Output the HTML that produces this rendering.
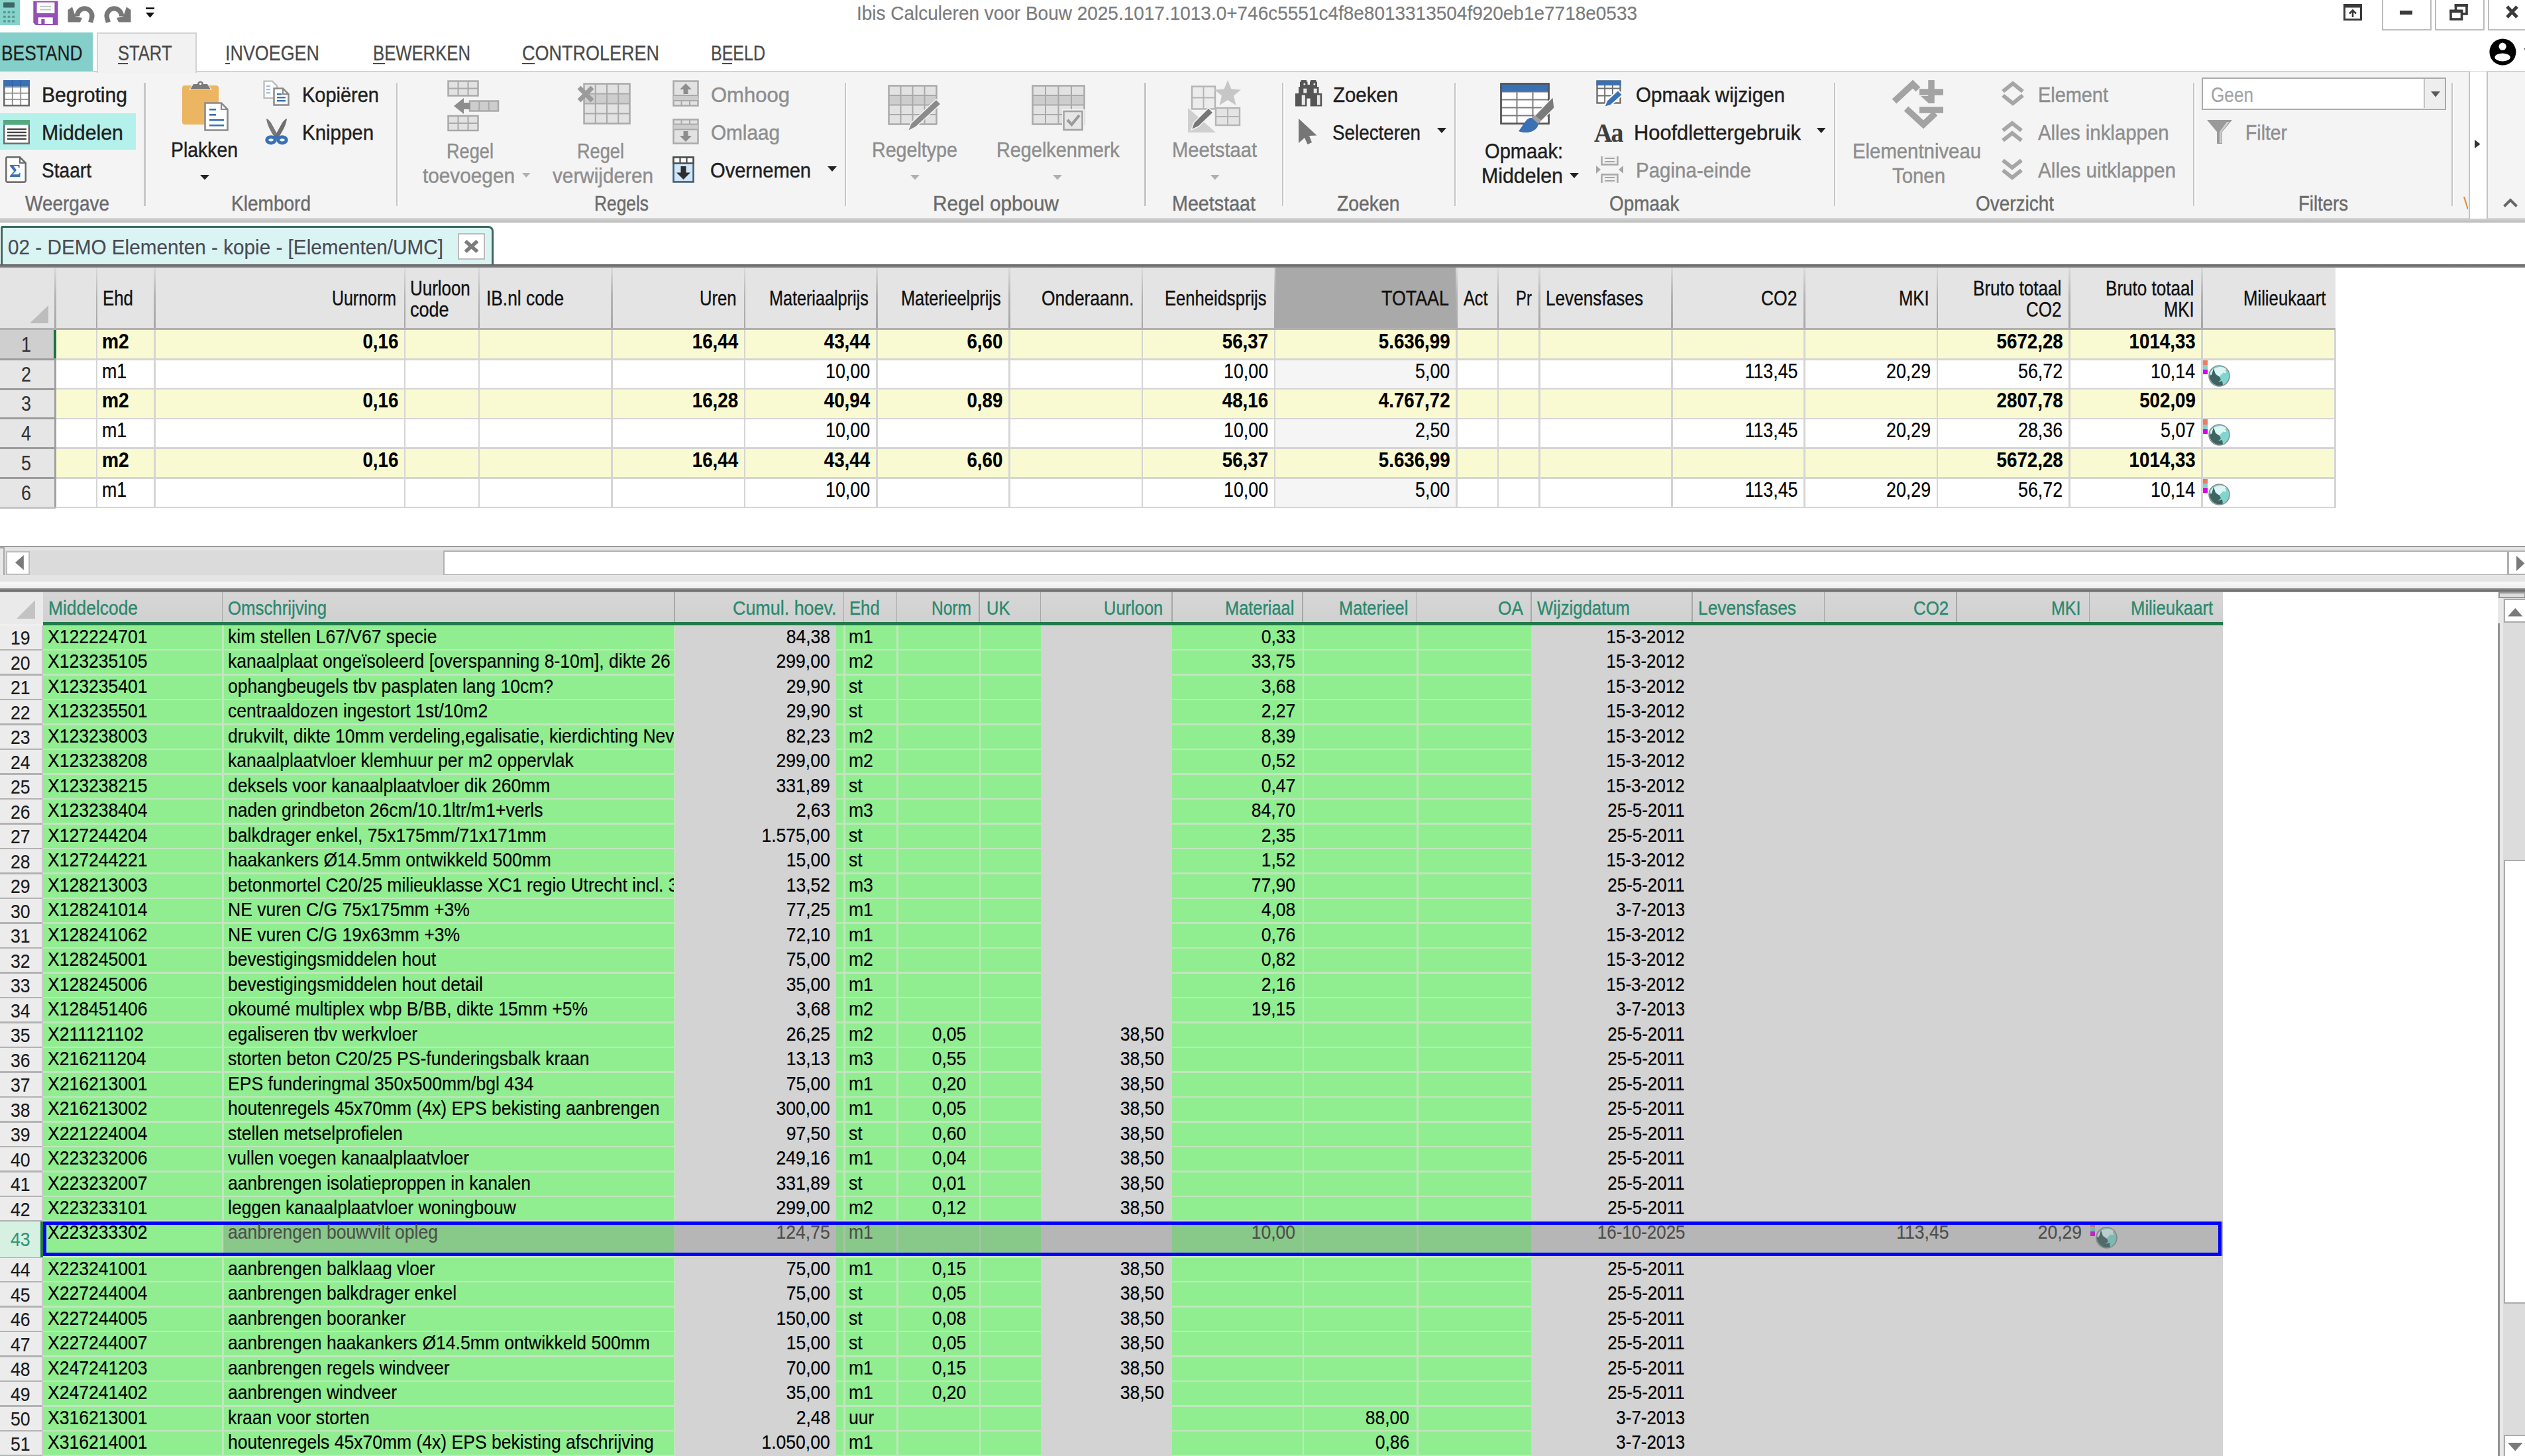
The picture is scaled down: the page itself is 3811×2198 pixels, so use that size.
<!DOCTYPE html>
<html><head><meta charset="utf-8"><title>Ibis Calculeren voor Bouw</title>
<style>
html,body{margin:0;padding:0;}
body{width:3811px;height:2198px;position:relative;overflow:hidden;background:#fff;
font-family:"Liberation Sans",sans-serif;}
#app{position:absolute;left:0;top:0;width:3811px;height:2198px;overflow:hidden;}
.r{position:absolute;box-sizing:border-box;}
.t{position:absolute;white-space:nowrap;line-height:1;display:block;-webkit-text-stroke:0.2px;}
.i{position:absolute;overflow:visible;}
</style></head>
<body>
<div id="app">
<span class="t" style="top:5.11px;font-size:30px;color:#7b7b7b;left:1293.00px;transform-origin:0 0;transform:scaleX(0.9323);">Ibis Calculeren voor Bouw 2025.1017.1013.0+746c5551c4f8e8013313504f920eb1e7718e0533</span>
<div class="r" style="left:3595px;top:-3px;width:75px;height:49px;background:#fff;border:2.5px solid #bcbcbc;"></div>
<div class="r" style="left:3675px;top:-3px;width:75px;height:49px;background:#fff;border:2.5px solid #bcbcbc;"></div>
<div class="r" style="left:3755px;top:-3px;width:75px;height:49px;background:#fff;border:2.5px solid #bcbcbc;"></div>
<div class="r" style="left:0px;top:49px;width:140px;height:59px;background:#84cfca;"></div>
<div class="r" style="left:0px;top:107px;width:3811px;height:223px;background:#f4f4f4;border-top:2.5px solid #d3d3d3;"></div>
<div class="r" style="left:0px;top:329px;width:3811px;height:6.5px;background:linear-gradient(#d6d6d6,#b9b9b9);"></div>
<div class="r" style="left:146px;top:49px;width:151px;height:61px;background:#f2f2f2;border:2.5px solid #d3d3d3;border-bottom:none;"></div>
<span class="t" style="top:64.76px;font-size:31px;color:#1e1e1e;left:1.50px;transform-origin:0 0;transform:scaleX(0.8498);-webkit-text-stroke:0.3px;">BESTAND</span>
<span class="t" style="top:64.76px;font-size:31px;color:#4a4a4a;left:177.50px;transform-origin:0 0;transform:scaleX(0.8254);-webkit-text-stroke:0.3px;">START</span>
<span class="t" style="top:64.76px;font-size:31px;color:#4a4a4a;left:339.50px;transform-origin:0 0;transform:scaleX(0.8675);-webkit-text-stroke:0.3px;">INVOEGEN</span>
<span class="t" style="top:64.76px;font-size:31px;color:#4a4a4a;left:562.50px;transform-origin:0 0;transform:scaleX(0.8283);-webkit-text-stroke:0.3px;">BEWERKEN</span>
<span class="t" style="top:64.76px;font-size:31px;color:#4a4a4a;left:788.00px;transform-origin:0 0;transform:scaleX(0.8706);-webkit-text-stroke:0.3px;">CONTROLEREN</span>
<span class="t" style="top:64.76px;font-size:31px;color:#4a4a4a;left:1073.00px;transform-origin:0 0;transform:scaleX(0.8065);-webkit-text-stroke:0.3px;">BEELD</span>
<div class="r" style="left:177.5px;top:94.5px;width:15px;height:2.5px;background:#4a4a4a;"></div>
<div class="r" style="left:339.5px;top:94.5px;width:7px;height:2.5px;background:#4a4a4a;"></div>
<div class="r" style="left:562.5px;top:94.5px;width:18px;height:2.5px;background:#4a4a4a;"></div>
<div class="r" style="left:788px;top:94.5px;width:18.5px;height:2.5px;background:#4a4a4a;"></div>
<div class="r" style="left:1090px;top:94.5px;width:15px;height:2.5px;background:#4a4a4a;"></div>
<div class="r" style="left:0px;top:171px;width:205px;height:55px;background:#b4f1eb;"></div>
<div class="r" style="left:217px;top:125px;width:2.5px;height:186px;background:#c6c6c6;"></div>
<div class="r" style="left:219.5px;top:125px;width:1.5px;height:186px;background:#fbfbfb;"></div>
<div class="r" style="left:597.5px;top:125px;width:2.5px;height:186px;background:#c6c6c6;"></div>
<div class="r" style="left:600px;top:125px;width:1.5px;height:186px;background:#fbfbfb;"></div>
<div class="r" style="left:1274.5px;top:125px;width:2.5px;height:186px;background:#c6c6c6;"></div>
<div class="r" style="left:1277px;top:125px;width:1.5px;height:186px;background:#fbfbfb;"></div>
<div class="r" style="left:1727px;top:125px;width:2.5px;height:186px;background:#c6c6c6;"></div>
<div class="r" style="left:1729.5px;top:125px;width:1.5px;height:186px;background:#fbfbfb;"></div>
<div class="r" style="left:1934.5px;top:125px;width:2.5px;height:186px;background:#c6c6c6;"></div>
<div class="r" style="left:1937px;top:125px;width:1.5px;height:186px;background:#fbfbfb;"></div>
<div class="r" style="left:2194.5px;top:125px;width:2.5px;height:186px;background:#c6c6c6;"></div>
<div class="r" style="left:2197px;top:125px;width:1.5px;height:186px;background:#fbfbfb;"></div>
<div class="r" style="left:2767.5px;top:125px;width:2.5px;height:186px;background:#c6c6c6;"></div>
<div class="r" style="left:2770px;top:125px;width:1.5px;height:186px;background:#fbfbfb;"></div>
<div class="r" style="left:3309.5px;top:125px;width:2.5px;height:186px;background:#c6c6c6;"></div>
<div class="r" style="left:3312px;top:125px;width:1.5px;height:186px;background:#fbfbfb;"></div>
<div class="r" style="left:3699.5px;top:125px;width:2.5px;height:186px;background:#c6c6c6;"></div>
<div class="r" style="left:3702px;top:125px;width:1.5px;height:186px;background:#fbfbfb;"></div>
<span class="t" style="top:127.76px;font-size:31px;color:#1f1f1f;left:63.00px;transform-origin:0 0;transform:scaleX(0.9723);-webkit-text-stroke:0.45px;">Begroting</span>
<span class="t" style="top:184.76px;font-size:31px;color:#1f1f1f;left:63.00px;transform-origin:0 0;transform:scaleX(0.9773);-webkit-text-stroke:0.45px;">Middelen</span>
<span class="t" style="top:241.76px;font-size:31px;color:#1f1f1f;left:63.00px;transform-origin:0 0;transform:scaleX(0.9061);-webkit-text-stroke:0.45px;">Staart</span>
<span class="t" style="top:291.76px;font-size:31px;color:#6b6b6b;left:38.00px;transform-origin:0 0;transform:scaleX(0.9024);-webkit-text-stroke:0.45px;">Weergave</span>
<span class="t" style="top:210.76px;font-size:31px;color:#1f1f1f;left:258.00px;transform-origin:0 0;transform:scaleX(0.9152);-webkit-text-stroke:0.45px;">Plakken</span>
<span class="t" style="top:127.76px;font-size:31px;color:#1f1f1f;left:456.00px;transform-origin:0 0;transform:scaleX(0.9343);-webkit-text-stroke:0.45px;">Kopiëren</span>
<span class="t" style="top:184.76px;font-size:31px;color:#1f1f1f;left:456.00px;transform-origin:0 0;transform:scaleX(0.9493);-webkit-text-stroke:0.45px;">Knippen</span>
<span class="t" style="top:291.76px;font-size:31px;color:#6b6b6b;left:349.00px;transform-origin:0 0;transform:scaleX(0.9044);-webkit-text-stroke:0.45px;">Klembord</span>
<span class="t" style="top:212.76px;font-size:31px;color:#8e8e8e;left:674.00px;transform-origin:0 0;transform:scaleX(0.8758);-webkit-text-stroke:0.45px;">Regel</span>
<span class="t" style="top:249.76px;font-size:31px;color:#8e8e8e;left:638.00px;transform-origin:0 0;transform:scaleX(0.9601);-webkit-text-stroke:0.45px;">toevoegen</span>
<span class="t" style="top:212.76px;font-size:31px;color:#8e8e8e;left:871.00px;transform-origin:0 0;transform:scaleX(0.8758);-webkit-text-stroke:0.45px;">Regel</span>
<span class="t" style="top:249.76px;font-size:31px;color:#8e8e8e;left:834.00px;transform-origin:0 0;transform:scaleX(0.9586);-webkit-text-stroke:0.45px;">verwijderen</span>
<span class="t" style="top:127.76px;font-size:31px;color:#8e8e8e;left:1073.00px;transform-origin:0 0;-webkit-text-stroke:0.45px;">Omhoog</span>
<span class="t" style="top:184.76px;font-size:31px;color:#8e8e8e;left:1073.00px;transform-origin:0 0;transform:scaleX(0.9585);-webkit-text-stroke:0.45px;">Omlaag</span>
<span class="t" style="top:241.76px;font-size:31px;color:#1f1f1f;left:1072.00px;transform-origin:0 0;transform:scaleX(0.9384);-webkit-text-stroke:0.45px;">Overnemen</span>
<span class="t" style="top:291.76px;font-size:31px;color:#6b6b6b;left:897.00px;transform-origin:0 0;transform:scaleX(0.8492);-webkit-text-stroke:0.45px;">Regels</span>
<span class="t" style="top:210.76px;font-size:31px;color:#8e8e8e;left:1316.00px;transform-origin:0 0;transform:scaleX(0.9237);-webkit-text-stroke:0.45px;">Regeltype</span>
<span class="t" style="top:210.76px;font-size:31px;color:#8e8e8e;left:1504.00px;transform-origin:0 0;transform:scaleX(0.9295);-webkit-text-stroke:0.45px;">Regelkenmerk</span>
<span class="t" style="top:291.76px;font-size:31px;color:#6b6b6b;left:1408.00px;transform-origin:0 0;transform:scaleX(0.9584);-webkit-text-stroke:0.45px;">Regel opbouw</span>
<span class="t" style="top:210.76px;font-size:31px;color:#8e8e8e;left:1769.00px;transform-origin:0 0;transform:scaleX(0.9406);-webkit-text-stroke:0.45px;">Meetstaat</span>
<span class="t" style="top:291.76px;font-size:31px;color:#6b6b6b;left:1769.00px;transform-origin:0 0;transform:scaleX(0.9259);-webkit-text-stroke:0.45px;">Meetstaat</span>
<span class="t" style="top:127.76px;font-size:31px;color:#1f1f1f;left:2012.00px;transform-origin:0 0;transform:scaleX(0.9479);-webkit-text-stroke:0.45px;">Zoeken</span>
<span class="t" style="top:184.76px;font-size:31px;color:#1f1f1f;left:2011.00px;transform-origin:0 0;transform:scaleX(0.8976);-webkit-text-stroke:0.45px;">Selecteren</span>
<span class="t" style="top:291.76px;font-size:31px;color:#6b6b6b;left:2017.50px;transform-origin:0 0;transform:scaleX(0.9141);-webkit-text-stroke:0.45px;">Zoeken</span>
<span class="t" style="top:212.76px;font-size:31px;color:#1f1f1f;left:2241.00px;transform-origin:0 0;transform:scaleX(0.9387);-webkit-text-stroke:0.45px;">Opmaak:</span>
<span class="t" style="top:249.76px;font-size:31px;color:#1f1f1f;left:2236.00px;transform-origin:0 0;transform:scaleX(0.9773);-webkit-text-stroke:0.45px;">Middelen</span>
<span class="t" style="top:127.76px;font-size:31px;color:#1f1f1f;left:2469.00px;transform-origin:0 0;transform:scaleX(0.9531);-webkit-text-stroke:0.45px;">Opmaak wijzigen</span>
<span class="t" style="top:184.76px;font-size:31px;color:#1f1f1f;left:2466.00px;transform-origin:0 0;transform:scaleX(0.9944);-webkit-text-stroke:0.45px;">Hoofdlettergebruik</span>
<span class="t" style="top:241.76px;font-size:31px;color:#8e8e8e;left:2469.00px;transform-origin:0 0;transform:scaleX(0.9521);-webkit-text-stroke:0.45px;">Pagina-einde</span>
<span class="t" style="top:291.76px;font-size:31px;color:#6b6b6b;left:2429.00px;transform-origin:0 0;transform:scaleX(0.8991);-webkit-text-stroke:0.45px;">Opmaak</span>
<span class="t" style="top:212.76px;font-size:31px;color:#8e8e8e;left:2796.00px;transform-origin:0 0;transform:scaleX(0.9460);-webkit-text-stroke:0.45px;">Elementniveau</span>
<span class="t" style="top:249.76px;font-size:31px;color:#8e8e8e;left:2856.00px;transform-origin:0 0;transform:scaleX(0.9470);-webkit-text-stroke:0.45px;">Tonen</span>
<span class="t" style="top:127.76px;font-size:31px;color:#8e8e8e;left:3076.00px;transform-origin:0 0;transform:scaleX(0.9317);-webkit-text-stroke:0.45px;">Element</span>
<span class="t" style="top:184.76px;font-size:31px;color:#8e8e8e;left:3076.00px;transform-origin:0 0;transform:scaleX(0.9474);-webkit-text-stroke:0.45px;">Alles inklappen</span>
<span class="t" style="top:241.76px;font-size:31px;color:#8e8e8e;left:3076.00px;transform-origin:0 0;transform:scaleX(0.9578);-webkit-text-stroke:0.45px;">Alles uitklappen</span>
<span class="t" style="top:291.76px;font-size:31px;color:#6b6b6b;left:2981.50px;transform-origin:0 0;transform:scaleX(0.9009);-webkit-text-stroke:0.45px;">Overzicht</span>
<span class="t" style="top:184.76px;font-size:31px;color:#8e8e8e;left:3389.00px;transform-origin:0 0;transform:scaleX(0.9154);-webkit-text-stroke:0.45px;">Filter</span>
<span class="t" style="top:291.76px;font-size:31px;color:#6b6b6b;left:3469.00px;transform-origin:0 0;transform:scaleX(0.8895);-webkit-text-stroke:0.45px;">Filters</span>
<div class="r" style="left:3323px;top:116.5px;width:369px;height:49px;background:#fff;border:2.5px solid #ababab;"></div>
<div class="r" style="left:3658px;top:119px;width:31.5px;height:44px;background:#eeeeee;border-left:2.5px solid #c4c4c4;"></div>
<span class="t" style="top:127.76px;font-size:31px;color:#a3a3a3;left:3337.00px;transform-origin:0 0;transform:scaleX(0.8444);">Geen</span>
<svg class="i" style="left:302px;top:264px" width="14" height="7.5" viewBox="0 0 14 7.5"><polygon points="0,0 14,0 7,7.5" fill="#222"/></svg>
<svg class="i" style="left:788px;top:261px" width="12.5" height="7" viewBox="0 0 12.5 7"><polygon points="0,0 12.5,0 6.25,7" fill="#b0b0b0"/></svg>
<svg class="i" style="left:1249px;top:251px" width="14" height="8" viewBox="0 0 14 8"><polygon points="0,0 14,0 7,8" fill="#222"/></svg>
<svg class="i" style="left:1374px;top:264px" width="14" height="7.5" viewBox="0 0 14 7.5"><polygon points="0,0 14,0 7,7.5" fill="#b0b0b0"/></svg>
<svg class="i" style="left:1589px;top:264px" width="14" height="7.5" viewBox="0 0 14 7.5"><polygon points="0,0 14,0 7,7.5" fill="#b0b0b0"/></svg>
<svg class="i" style="left:1827px;top:264px" width="13.5" height="7.5" viewBox="0 0 13.5 7.5"><polygon points="0,0 13.5,0 6.75,7.5" fill="#b0b0b0"/></svg>
<svg class="i" style="left:2169px;top:193px" width="14" height="8" viewBox="0 0 14 8"><polygon points="0,0 14,0 7,8" fill="#222"/></svg>
<svg class="i" style="left:2369px;top:261px" width="14" height="8" viewBox="0 0 14 8"><polygon points="0,0 14,0 7,8" fill="#222"/></svg>
<svg class="i" style="left:2742px;top:193px" width="13.5" height="8" viewBox="0 0 13.5 8"><polygon points="0,0 13.5,0 6.75,8" fill="#222"/></svg>
<svg class="i" style="left:3669px;top:138px" width="14" height="8.5" viewBox="0 0 14 8.5"><polygon points="0,0 14,0 7,8.5" fill="#5a5a5a"/></svg>
<div class="r" style="left:3726px;top:108px;width:28.5px;height:222px;background:#fff;border-left:2.5px solid #c4c4c4;border-right:2.5px solid #c4c4c4;"></div>
<svg class="i" style="left:3735px;top:211px" width="8.5" height="13" viewBox="0 0 8.5 13"><polygon points="0,0 8.5,6.5 0,13" fill="#333"/></svg>
<svg class="i" style="left:3778px;top:299px" width="22" height="14" viewBox="0 0 22 14"><polyline points="1.5,12.5 11,3 20.5,12.5" fill="none" stroke="#666" stroke-width="4"/></svg>
<span class="t" style="top:293.30px;font-size:28px;color:#e08a3c;left:3718.00px;transform-origin:0 0;transform:scaleX(0.7496);clip-path:inset(0 50% 0 0);">V</span>
<div class="r" style="left:1px;top:341px;width:744px;height:60px;background:#daf4f4;border:3.2px solid #3d6862;border-bottom:none;border-radius:3px 8px 0 0;"></div>
<span class="t" style="top:356.91px;font-size:32px;color:#4b4b55;left:12.00px;transform-origin:0 0;transform:scaleX(0.9282);">02 - DEMO Elementen - kopie - [Elementen/UMC]</span>
<div class="r" style="left:691px;top:352px;width:41px;height:40px;background:#fff;border:2.5px solid #bcbcbc;"></div>
<svg class="i" style="left:700px;top:363px" width="23" height="18" viewBox="0 0 23 18"><path d="M2.5,1 L20.5,17 M20.5,1 L2.5,17" stroke="#7c7c7c" stroke-width="5.6" fill="none"/></svg>
<div class="r" style="left:0px;top:398.5px;width:3811px;height:5.5px;background:linear-gradient(#5f5f5f,#8a8a8a);"></div>
<svg class="i" style="left:0px;top:0px" width="30" height="38" viewBox="0 0 30 38"><rect x="0" y="0" width="30" height="38" fill="#86d3cc"/><rect x="5" y="3.6" width="17" height="7.8" rx="1" fill="#3e6663"/><rect x="5" y="17" width="3.8" height="3.2" fill="#5c9691"/><rect x="11.6" y="17" width="3.8" height="3.2" fill="#5c9691"/><rect x="18.2" y="17" width="3.8" height="3.2" fill="#5c9691"/><rect x="5" y="23.7" width="3.8" height="3.2" fill="#5c9691"/><rect x="11.6" y="23.7" width="3.8" height="3.2" fill="#5c9691"/><rect x="18.2" y="23.7" width="3.8" height="3.2" fill="#5c9691"/><rect x="5" y="30.4" width="3.8" height="3.2" fill="#5c9691"/><rect x="11.6" y="30.4" width="3.8" height="3.2" fill="#5c9691"/><rect x="18.2" y="30.4" width="3.8" height="3.2" fill="#5c9691"/></svg>
<svg class="i" style="left:50px;top:1px" width="38" height="37" viewBox="0 0 38 37"><path d="M0.3,0.5 H37.5 V37 H4 L0.3,33.5 Z" fill="#9450b4"/><rect x="5.6" y="2.6" width="26.8" height="16.4" fill="#fff"/><rect x="10" y="7.8" width="17" height="2" fill="#c2c2c2"/><rect x="10" y="12.5" width="17" height="2" fill="#c2c2c2"/><rect x="7.7" y="25.3" width="22" height="9.7" fill="#fff"/><rect x="12.3" y="28" width="5.2" height="7" fill="#9450b4"/></svg>
<svg class="i" style="left:102px;top:8px" width="40" height="26" viewBox="0 0 40 26"><path d="M34.6,25.8 L36.2,20 A11.2,11.2 0 1 0 14.5,16.5" fill="none" stroke="#787878" stroke-width="7.2"/><polygon points="0.5,7 0.5,25.5 19,25.5 22,19 12,17 7,2.5" fill="#787878"/></svg>
<svg class="i" style="left:157.5px;top:8px" width="40" height="26" viewBox="0 0 40 26"><g transform="translate(40,0) scale(-1,1)"><path d="M34.6,25.8 L36.2,20 A11.2,11.2 0 1 0 14.5,16.5" fill="none" stroke="#787878" stroke-width="7.2"/><polygon points="0.5,7 0.5,25.5 19,25.5 22,19 12,17 7,2.5" fill="#787878"/></g></svg>
<svg class="i" style="left:219.5px;top:10.5px" width="13" height="16" viewBox="0 0 13 16"><rect x="0" y="0.3" width="13" height="2.6" fill="#111"/><polygon points="0,8 13,8 6.5,15.8" fill="#111"/></svg>
<svg class="i" style="left:5px;top:120.8px" width="40" height="39.5" viewBox="0 0 40 39.5"><rect x="1.2" y="1.2" width="37.6" height="37" fill="#fff"/><line x1="13.7333" y1="1.2" x2="13.7333" y2="38.2" stroke="#8a8a8a" stroke-width="1.7600000000000002"/><line x1="26.2667" y1="1.2" x2="26.2667" y2="38.2" stroke="#8a8a8a" stroke-width="1.7600000000000002"/><line x1="1.2" y1="10.45" x2="38.8" y2="10.45" stroke="#8a8a8a" stroke-width="1.7600000000000002"/><line x1="1.2" y1="19.7" x2="38.8" y2="19.7" stroke="#8a8a8a" stroke-width="1.7600000000000002"/><line x1="1.2" y1="28.95" x2="38.8" y2="28.95" stroke="#8a8a8a" stroke-width="1.7600000000000002"/><rect x="1.2" y="1.2" width="37.6" height="37" fill="none" stroke="#8a8a8a" stroke-width="2.2"/><rect x="1.2" y="1.2" width="37.6" height="37" fill="none" stroke="#6a6a6a" stroke-width="2.4"/><rect x="0" y="0" width="40" height="9.6" fill="#3a70b4"/><path d="M13.7,0 V9.6 M26.3,0 V9.6" stroke="#2f63a5" stroke-width="1.8"/></svg>
<svg class="i" style="left:5px;top:181px" width="40" height="37" viewBox="0 0 40 37"><rect x="1.2" y="1.2" width="37.6" height="34.4" fill="#fff" stroke="#6a6a6a" stroke-width="2.4"/><rect x="0" y="0" width="40" height="7.6" fill="#55ab80"/><rect x="5.8" y="12.8" width="29" height="2.4" fill="#444"/><rect x="5.8" y="17.7" width="29" height="2.4" fill="#444"/><rect x="5.8" y="22.6" width="29" height="2.4" fill="#444"/><rect x="5.8" y="27.5" width="29" height="2.4" fill="#444"/></svg>
<svg class="i" style="left:8px;top:236px" width="32" height="40" viewBox="0 0 32 40"><path d="M3,1.3 H22 L30.7,10 V36.5 Q30.7,38.7 28.5,38.7 H3 Q1.3,38.7 1.3,36.5 V3 Q1.3,1.3 3,1.3 Z" fill="#fff" stroke="#6a6a6a" stroke-width="2.5"/><path d="M22,1.5 V10 H30.5" fill="none" stroke="#6a6a6a" stroke-width="2.2"/></svg>
<span class="t" style="left:14px;top:244.5px;font-family:'Liberation Serif',serif;font-weight:bold;font-size:27px;color:#3a70b4;">Σ</span>
<svg class="i" style="left:275px;top:122px" width="70" height="76" viewBox="0 0 70 76"><rect x="0" y="7" width="55" height="59" rx="4" fill="#ecb562"/><path d="M12,13 L17,5 H23 C23,-1 32,-1 32,5 H38 L43,13 Z" fill="#7a7a7a" stroke="#fbf3e4" stroke-width="2" paint-order="stroke"/><circle cx="27.5" cy="4.5" r="1.8" fill="#f4f4f4"/><path d="M34.5,33.5 H59 L68.5,43 V74.5 H34.5 Z" fill="#fff" stroke="#8a8a8a" stroke-width="2.6"/><path d="M59,33.5 V43 H68.5" fill="none" stroke="#8a8a8a" stroke-width="2.2"/><rect x="41" y="42" width="10" height="2.6" fill="#3a70b4"/><rect x="41" y="50" width="10" height="2.6" fill="#3a70b4"/><rect x="41" y="58" width="22" height="2.6" fill="#3a70b4"/><rect x="41" y="66" width="22" height="2.6" fill="#3a70b4"/></svg>
<svg class="i" style="left:397px;top:121px" width="40" height="39" viewBox="0 0 40 39"><path d="M1.5,1.5 H14 L21,8.5 V27 H1.5 Z" fill="#fdfdfd" stroke="#b8b8b8" stroke-width="2.2"/><rect x="5" y="8" width="6" height="2.2" fill="#9dbde0"/><rect x="5" y="13" width="6" height="2.2" fill="#9dbde0"/><rect x="5" y="18" width="6" height="2.2" fill="#9dbde0"/><path d="M16.5,12.5 H30 L38.5,21 V37.5 H16.5 Z" fill="#fff" stroke="#8a8a8a" stroke-width="2.5"/><path d="M30,12.5 V21 H38.5" fill="none" stroke="#8a8a8a" stroke-width="2"/><rect x="21" y="20" width="7" height="2.4" fill="#3a70b4"/><rect x="21" y="25" width="13" height="2.4" fill="#3a70b4"/><rect x="21" y="30" width="13" height="2.4" fill="#3a70b4"/></svg>
<svg class="i" style="left:400px;top:179px" width="35" height="39" viewBox="0 0 35 39"><path d="M2,0 C5,1 8,4 10,8 L21,28 L15.5,30 C9,20 3,10 2,0 Z" fill="#7a7a7a"/><path d="M33,0 C30,1 27,4 25,8 L14,28 L19.5,30 C26,20 32,10 33,0 Z" fill="#6e6e6e"/><ellipse cx="9" cy="32.3" rx="6.3" ry="4.6" fill="none" stroke="#3a70b4" stroke-width="5"/><ellipse cx="26" cy="32.3" rx="6.3" ry="4.6" fill="none" stroke="#3a70b4" stroke-width="5"/><rect x="14" y="25.5" width="7" height="6" fill="#3a70b4"/></svg>
<svg class="i" style="left:675px;top:121px" width="78" height="77" viewBox="0 0 78 77"><rect x="1.5" y="1.5" width="45" height="22" fill="#e2e2e2"/><line x1="16.5" y1="1.5" x2="16.5" y2="23.5" stroke="#a9a9a9" stroke-width="2.0"/><line x1="31.5" y1="1.5" x2="31.5" y2="23.5" stroke="#a9a9a9" stroke-width="2.0"/><line x1="1.5" y1="12.5" x2="46.5" y2="12.5" stroke="#a9a9a9" stroke-width="2.0"/><rect x="1.5" y="1.5" width="45" height="22" fill="none" stroke="#a9a9a9" stroke-width="2.5"/><rect x="1.5" y="54" width="45" height="22" fill="#e2e2e2"/><line x1="16.5" y1="54" x2="16.5" y2="76" stroke="#a9a9a9" stroke-width="2.0"/><line x1="31.5" y1="54" x2="31.5" y2="76" stroke="#a9a9a9" stroke-width="2.0"/><line x1="1.5" y1="65" x2="46.5" y2="65" stroke="#a9a9a9" stroke-width="2.0"/><rect x="1.5" y="54" width="45" height="22" fill="none" stroke="#a9a9a9" stroke-width="2.5"/><rect x="34" y="31.5" width="43" height="15" fill="#cdcdcd"/><line x1="48.3333" y1="31.5" x2="48.3333" y2="46.5" stroke="#a9a9a9" stroke-width="2.0"/><line x1="62.6667" y1="31.5" x2="62.6667" y2="46.5" stroke="#a9a9a9" stroke-width="2.0"/><rect x="34" y="31.5" width="43" height="15" fill="none" stroke="#a9a9a9" stroke-width="2.5"/><polygon points="10,39 25,27 25,34 34,34 34,44 25,44 25,51" fill="#8d8d8d"/></svg>
<svg class="i" style="left:872px;top:125px" width="80" height="63" viewBox="0 0 80 63"><rect x="9.5" y="1.5" width="69" height="60" fill="#e2e2e2"/><rect x="9.5" y="16.5" width="69" height="15" fill="#cdcdcd"/><line x1="26.75" y1="1.5" x2="26.75" y2="61.5" stroke="#a9a9a9" stroke-width="2.0"/><line x1="44" y1="1.5" x2="44" y2="61.5" stroke="#a9a9a9" stroke-width="2.0"/><line x1="61.25" y1="1.5" x2="61.25" y2="61.5" stroke="#a9a9a9" stroke-width="2.0"/><line x1="9.5" y1="16.5" x2="78.5" y2="16.5" stroke="#a9a9a9" stroke-width="2.0"/><line x1="9.5" y1="31.5" x2="78.5" y2="31.5" stroke="#a9a9a9" stroke-width="2.0"/><line x1="9.5" y1="46.5" x2="78.5" y2="46.5" stroke="#a9a9a9" stroke-width="2.0"/><rect x="9.5" y="1.5" width="69" height="60" fill="none" stroke="#a9a9a9" stroke-width="2.5"/><path d="M2,7 L22,27 M22,7 L2,27" stroke="#9b9b9b" stroke-width="7" fill="none"/></svg>
<svg class="i" style="left:1015px;top:121px" width="40" height="40" viewBox="0 0 40 40"><rect x="1.5" y="1.5" width="37" height="37" fill="#e2e2e2" stroke="#a9a9a9" stroke-width="2.5"/><rect x="1.5" y="23" width="37" height="8" fill="#cdcdcd"/><path d="M1.5,23 H38.5 M1.5,31 H38.5 M13.5,31 V38.5 M26,31 V38.5" stroke="#a9a9a9" stroke-width="2" fill="none"/><polygon points="20,5 29,14 23.5,14 23.5,21 16.5,21 16.5,14 11,14" fill="#8d8d8d"/></svg>
<svg class="i" style="left:1015px;top:179px" width="40" height="39" viewBox="0 0 40 39"><rect x="1.5" y="1.5" width="37" height="36" fill="#e2e2e2" stroke="#a9a9a9" stroke-width="2.5"/><rect x="1.5" y="8.5" width="37" height="8" fill="#cdcdcd"/><path d="M1.5,8.5 H38.5 M1.5,16.5 H38.5 M13.5,1.5 V8.5 M26,1.5 V8.5" stroke="#a9a9a9" stroke-width="2" fill="none"/><polygon points="20,35 29,26 23.5,26 23.5,19 16.5,19 16.5,26 11,26" fill="#8d8d8d"/></svg>
<svg class="i" style="left:1015px;top:236px" width="33" height="40" viewBox="0 0 33 40"><rect x="1.5" y="1.5" width="30" height="37" fill="#cfe7f8" stroke="#3f5d76" stroke-width="2.6"/><rect x="1.5" y="1.5" width="30" height="9" fill="#fff" stroke="#4e4e4e" stroke-width="2.6"/><path d="M11.5,1.5 V10.5 M21.5,1.5 V10.5" stroke="#4e4e4e" stroke-width="2.2"/><polygon points="16.5,35 27,24.5 20.5,24.5 20.5,15 12.5,15 12.5,24.5 6,24.5" fill="#2e2e2e"/></svg>
<svg class="i" style="left:1340px;top:128px" width="80" height="72" viewBox="0 0 80 72"><rect x="1.5" y="1.5" width="72" height="58" fill="#e2e2e2"/><rect x="1.5" y="16" width="72" height="14.5" fill="#cdcdcd"/><line x1="19.5" y1="1.5" x2="19.5" y2="59.5" stroke="#a9a9a9" stroke-width="2.0"/><line x1="37.5" y1="1.5" x2="37.5" y2="59.5" stroke="#a9a9a9" stroke-width="2.0"/><line x1="55.5" y1="1.5" x2="55.5" y2="59.5" stroke="#a9a9a9" stroke-width="2.0"/><line x1="1.5" y1="16" x2="73.5" y2="16" stroke="#a9a9a9" stroke-width="2.0"/><line x1="1.5" y1="30.5" x2="73.5" y2="30.5" stroke="#a9a9a9" stroke-width="2.0"/><line x1="1.5" y1="45" x2="73.5" y2="45" stroke="#a9a9a9" stroke-width="2.0"/><rect x="1.5" y="1.5" width="72" height="58" fill="none" stroke="#a9a9a9" stroke-width="2.5"/><polygon points="73,22 80,29 42,64 30,70 35,58" fill="#8b8b8b" stroke="#f4f4f4" stroke-width="1.5"/></svg>
<svg class="i" style="left:1557px;top:128px" width="81" height="70" viewBox="0 0 81 70"><rect x="1.5" y="1.5" width="78" height="58" fill="#e2e2e2"/><rect x="1.5" y="16" width="78" height="14.5" fill="#cdcdcd"/><line x1="21" y1="1.5" x2="21" y2="59.5" stroke="#a9a9a9" stroke-width="2.0"/><line x1="40.5" y1="1.5" x2="40.5" y2="59.5" stroke="#a9a9a9" stroke-width="2.0"/><line x1="60" y1="1.5" x2="60" y2="59.5" stroke="#a9a9a9" stroke-width="2.0"/><line x1="1.5" y1="16" x2="79.5" y2="16" stroke="#a9a9a9" stroke-width="2.0"/><line x1="1.5" y1="30.5" x2="79.5" y2="30.5" stroke="#a9a9a9" stroke-width="2.0"/><line x1="1.5" y1="45" x2="79.5" y2="45" stroke="#a9a9a9" stroke-width="2.0"/><rect x="1.5" y="1.5" width="78" height="58" fill="none" stroke="#a9a9a9" stroke-width="2.5"/><rect x="46" y="37" width="34" height="33" fill="#f4f4f4"/><rect x="48.5" y="40" width="28" height="28" fill="#e6e6e6" stroke="#a3a3a3" stroke-width="2.6"/><path d="M54,53 L60.5,60 L72,46" fill="none" stroke="#9a9a9a" stroke-width="4.2"/></svg>
<svg class="i" style="left:1792px;top:121px" width="81" height="79" viewBox="0 0 81 79"><rect x="7" y="9.5" width="35" height="34" fill="#ececec"/><line x1="24.5" y1="9.5" x2="24.5" y2="43.5" stroke="#b4b4b4" stroke-width="1.92"/><line x1="7" y1="26.5" x2="42" y2="26.5" stroke="#b4b4b4" stroke-width="1.92"/><rect x="7" y="9.5" width="35" height="34" fill="none" stroke="#b4b4b4" stroke-width="2.4"/><rect x="43" y="42" width="36" height="26" fill="#e4e4e4"/><line x1="61" y1="42" x2="61" y2="68" stroke="#b4b4b4" stroke-width="1.92"/><line x1="43" y1="55" x2="79" y2="55" stroke="#b4b4b4" stroke-width="1.92"/><rect x="43" y="42" width="36" height="26" fill="none" stroke="#b4b4b4" stroke-width="2.4"/><polygon points="61,0 66.5,13.5 81,14.5 70,23.5 73.5,38 61,30 48.5,38 52,23.5 41,14.5 55.5,13.5" fill="#c6c6c6"/><polygon points="1,42 43,79 1,79" fill="#cfcfcf"/><polygon points="32,42 39,49 17,70 6,75 10,64" fill="#777" stroke="#f4f4f4" stroke-width="1.5"/></svg>
<svg class="i" style="left:1955px;top:121px" width="41" height="40" viewBox="0 0 41 40"><rect x="8.7" y="0" width="8.3" height="3" fill="#555555"/><rect x="23" y="0" width="8.3" height="3" fill="#555555"/><rect x="7" y="2.4" width="11.5" height="8" fill="#555555"/><rect x="22" y="2.4" width="11" height="8" fill="#555555"/><rect x="18" y="6.8" width="5" height="3.6" fill="#555555"/><rect x="5" y="10" width="30.5" height="10.2" fill="#555555"/><rect x="0" y="20" width="40.2" height="19.5" fill="#555555"/><rect x="17.4" y="27.6" width="5.2" height="12.5" fill="#f4f4f4"/><circle cx="13.8" cy="6" r="1.5" fill="#e9e9e9"/><circle cx="28.8" cy="6" r="1.5" fill="#e9e9e9"/><rect x="12.3" y="12.7" width="5" height="6.7" fill="#e9e9e9"/><rect x="27.7" y="12.7" width="5" height="6.7" fill="#e9e9e9"/><rect x="9.7" y="22.5" width="5.2" height="15" fill="#e9e9e9"/><rect x="32.9" y="22.5" width="4.6" height="15" fill="#e9e9e9"/></svg>
<svg class="i" style="left:1960px;top:179px" width="28" height="39" viewBox="0 0 28 39"><polygon points="0,0 0,37 9,29 13.5,39 20,36 16,26 27.5,25.5" fill="#767676"/></svg>
<svg class="i" style="left:2264px;top:125px" width="82" height="76" viewBox="0 0 82 76"><rect x="1.5" y="1.5" width="72" height="60" fill="#fff"/><line x1="25.5" y1="1.5" x2="25.5" y2="61.5" stroke="#7c7c7c" stroke-width="2.0"/><line x1="49.5" y1="1.5" x2="49.5" y2="61.5" stroke="#7c7c7c" stroke-width="2.0"/><line x1="1.5" y1="13.5" x2="73.5" y2="13.5" stroke="#7c7c7c" stroke-width="2.0"/><line x1="1.5" y1="25.5" x2="73.5" y2="25.5" stroke="#7c7c7c" stroke-width="2.0"/><line x1="1.5" y1="37.5" x2="73.5" y2="37.5" stroke="#7c7c7c" stroke-width="2.0"/><line x1="1.5" y1="49.5" x2="73.5" y2="49.5" stroke="#7c7c7c" stroke-width="2.0"/><rect x="1.5" y="1.5" width="72" height="60" fill="none" stroke="#7c7c7c" stroke-width="2.5"/><rect x="0.5" y="0.5" width="74" height="12.5" fill="#3a70b4"/><rect x="1.5" y="1.5" width="72" height="60" fill="none" stroke="#555" stroke-width="2.5"/><polygon points="80,21 82,38 62,58 52,50" fill="#7b7b7b" stroke="#f4f4f4" stroke-width="1.5"/><polygon points="52,49 62,57 58,62 48,54" fill="#a0a0a0"/><path d="M48,53 C40,52 38,60 28,73 C40,78 56,74 58,62 Z" fill="#3a70b4"/></svg>
<svg class="i" style="left:2409px;top:121px" width="41" height="40" viewBox="0 0 41 40"><rect x="1.5" y="1.5" width="35" height="33" fill="#fff"/><line x1="13.1667" y1="1.5" x2="13.1667" y2="34.5" stroke="#6c6c6c" stroke-width="1.92"/><line x1="24.8333" y1="1.5" x2="24.8333" y2="34.5" stroke="#6c6c6c" stroke-width="1.92"/><line x1="1.5" y1="12.5" x2="36.5" y2="12.5" stroke="#6c6c6c" stroke-width="1.92"/><line x1="1.5" y1="23.5" x2="36.5" y2="23.5" stroke="#6c6c6c" stroke-width="1.92"/><rect x="1.5" y="1.5" width="35" height="33" fill="none" stroke="#6c6c6c" stroke-width="2.4"/><rect x="0.5" y="0.5" width="37" height="7.5" fill="#3a70b4"/><polygon points="33,15 40,22 22,38 12,41 16,31" fill="#3a70b4" stroke="#f4f4f4" stroke-width="2.2"/></svg>
<span class="t" style="left:2406px;top:180px;font-family:'Liberation Serif',serif;font-weight:bold;font-size:41px;color:#3e3e3e;letter-spacing:-2px;transform:scaleX(.92);transform-origin:0 0">Aa</span>
<svg class="i" style="left:2409px;top:236px" width="41" height="40" viewBox="0 0 41 40"><path d="M8.5,0 V12.5 H32.5 V0" fill="#f0f0f0" stroke="#a6a6a6" stroke-width="2.4"/><path d="M8.5,40 V27.5 H32.5 V40" fill="#f0f0f0" stroke="#a6a6a6" stroke-width="2.4"/><path d="M13,3 H28 M13,8 H28 M13,32 H28 M13,37 H28" stroke="#a6a6a6" stroke-width="2"/><polygon points="0,14 7,20 0,26" fill="#a6a6a6"/><polygon points="41,14 34,20 41,26" fill="#a6a6a6"/></svg>
<svg class="i" style="left:2857px;top:121px" width="76" height="73" viewBox="0 0 76 73"><polyline points="2,32 30,6 38,14" fill="none" stroke="#a3a3a3" stroke-width="9.5"/><path d="M40,18 H76 M58,0 V35" stroke="#a3a3a3" stroke-width="9.5"/><polygon points="42,24 54,24 54,35" fill="#a3a3a3"/><path d="M40,45 H76" stroke="#a3a3a3" stroke-width="9.5"/><polyline points="20,43 46,67 64,50" fill="none" stroke="#a3a3a3" stroke-width="9.5"/></svg>
<svg class="i" style="left:3020px;top:123px" width="36" height="36" viewBox="0 0 36 36"><polyline points="3,15 18,3 33,15" fill="none" stroke="#a6a6a6" stroke-width="6"/><polyline points="3,21 18,33 33,21" fill="none" stroke="#a6a6a6" stroke-width="6"/></svg>
<svg class="i" style="left:3021px;top:183px" width="32" height="31" viewBox="0 0 32 31"><polyline points="2,14 16,3 30,14" fill="none" stroke="#a6a6a6" stroke-width="6"/><polyline points="2,29 16,18 30,29" fill="none" stroke="#a6a6a6" stroke-width="6"/></svg>
<svg class="i" style="left:3021px;top:240px" width="32" height="31" viewBox="0 0 32 31"><polyline points="2,2 16,13 30,2" fill="none" stroke="#a6a6a6" stroke-width="6"/><polyline points="2,17 16,28 30,17" fill="none" stroke="#a6a6a6" stroke-width="6"/></svg>
<svg class="i" style="left:3331px;top:180px" width="38" height="38" viewBox="0 0 38 38"><polygon points="0,1 38,1 23,19 23,37 15,37 15,19" fill="#9a9a9a"/><polygon points="19,19 30,4 34,4 22,19 22,36 19,36" fill="#cfcfcf"/></svg>
<svg class="i" style="left:3537px;top:6px" width="28" height="25" viewBox="0 0 28 25"><rect x="1.5" y="1.5" width="25" height="22" fill="#fff" stroke="#3a3a3a" stroke-width="3"/><rect x="1.5" y="1.5" width="25" height="4" fill="#3a3a3a"/><path d="M14,20 V10 M9,14.5 L14,9.5 L19,14.5" fill="none" stroke="#3a3a3a" stroke-width="2.6"/></svg>
<div class="r" style="left:3622px;top:16px;width:18.5px;height:5.5px;background:#3a3a3a;"></div>
<svg class="i" style="left:3697px;top:6px" width="28" height="25" viewBox="0 0 28 25"><rect x="9.5" y="2" width="16.5" height="13" fill="#fff" stroke="#3a3a3a" stroke-width="3.6"/><rect x="2" y="10.5" width="16.5" height="12.5" fill="#fff" stroke="#3a3a3a" stroke-width="3.6"/><rect x="0.2" y="8.7" width="20" height="4.6" fill="#3a3a3a"/><rect x="7.7" y="0.2" width="20" height="4" fill="#3a3a3a"/></svg>
<svg class="i" style="left:3782px;top:9px" width="19" height="18" viewBox="0 0 19 18"><path d="M2,1 L17,17 M17,1 L2,17" stroke="#3a3a3a" stroke-width="5" fill="none"/></svg>
<svg class="i" style="left:3758px;top:58px" width="40" height="41" viewBox="0 0 40 41"><circle cx="19.4" cy="20.5" r="20" fill="#000"/><circle cx="19.1" cy="12.2" r="5.6" fill="#fff"/><ellipse cx="19.1" cy="28.5" rx="11.7" ry="5.9" fill="#fff"/></svg>
<svg class="i" style="left:3808.5px;top:72.5px" width="8" height="5" viewBox="0 0 8 5"><polygon points="0,0 8,0 4,5" fill="#444"/></svg>
<div class="r" style="left:0px;top:404px;width:3524.5px;height:93.5px;background:#e4e4e4;"></div>
<div class="r" style="left:1924px;top:404px;width:274.5px;height:93.5px;background:#a9a9a9;"></div>
<div class="r" style="left:83.5px;top:497.5px;width:3441px;height:44.75px;background:#fafad2;"></div>
<div class="r" style="left:0px;top:497.5px;width:83.5px;height:44.75px;background:#cfcfcf;"></div>
<div class="r" style="left:1924px;top:542.25px;width:274.5px;height:44.75px;background:#f5f5f5;"></div>
<div class="r" style="left:0px;top:542.25px;width:83.5px;height:44.75px;background:#e6e6e6;"></div>
<div class="r" style="left:83.5px;top:587px;width:3441px;height:44.75px;background:#fafad2;"></div>
<div class="r" style="left:0px;top:587px;width:83.5px;height:44.75px;background:#e6e6e6;"></div>
<div class="r" style="left:1924px;top:631.75px;width:274.5px;height:44.75px;background:#f5f5f5;"></div>
<div class="r" style="left:0px;top:631.75px;width:83.5px;height:44.75px;background:#e6e6e6;"></div>
<div class="r" style="left:83.5px;top:676.5px;width:3441px;height:44.75px;background:#fafad2;"></div>
<div class="r" style="left:0px;top:676.5px;width:83.5px;height:44.75px;background:#e6e6e6;"></div>
<div class="r" style="left:1924px;top:721.25px;width:274.5px;height:44.75px;background:#f5f5f5;"></div>
<div class="r" style="left:0px;top:721.25px;width:83.5px;height:44.75px;background:#e6e6e6;"></div>
<div class="r" style="left:83.5px;top:541px;width:3441px;height:2.5px;background:#d5d5d5;"></div>
<div class="r" style="left:83.5px;top:585.75px;width:3441px;height:2.5px;background:#d5d5d5;"></div>
<div class="r" style="left:83.5px;top:630.5px;width:3441px;height:2.5px;background:#d5d5d5;"></div>
<div class="r" style="left:83.5px;top:675.25px;width:3441px;height:2.5px;background:#d5d5d5;"></div>
<div class="r" style="left:83.5px;top:720px;width:3441px;height:2.5px;background:#d5d5d5;"></div>
<div class="r" style="left:83.5px;top:764.75px;width:3441px;height:2.5px;background:#d5d5d5;"></div>
<div class="r" style="left:144.75px;top:497.5px;width:2.5px;height:269.75px;background:#d5d5d5;"></div>
<div class="r" style="left:232.25px;top:497.5px;width:2.5px;height:269.75px;background:#d5d5d5;"></div>
<div class="r" style="left:609.75px;top:497.5px;width:2.5px;height:269.75px;background:#d5d5d5;"></div>
<div class="r" style="left:721.75px;top:497.5px;width:2.5px;height:269.75px;background:#d5d5d5;"></div>
<div class="r" style="left:922.25px;top:497.5px;width:2.5px;height:269.75px;background:#d5d5d5;"></div>
<div class="r" style="left:1122.75px;top:497.5px;width:2.5px;height:269.75px;background:#d5d5d5;"></div>
<div class="r" style="left:1322.25px;top:497.5px;width:2.5px;height:269.75px;background:#d5d5d5;"></div>
<div class="r" style="left:1522.25px;top:497.5px;width:2.5px;height:269.75px;background:#d5d5d5;"></div>
<div class="r" style="left:1722.75px;top:497.5px;width:2.5px;height:269.75px;background:#d5d5d5;"></div>
<div class="r" style="left:1922.75px;top:497.5px;width:2.5px;height:269.75px;background:#d5d5d5;"></div>
<div class="r" style="left:2197.25px;top:497.5px;width:2.5px;height:269.75px;background:#d5d5d5;"></div>
<div class="r" style="left:2259.75px;top:497.5px;width:2.5px;height:269.75px;background:#d5d5d5;"></div>
<div class="r" style="left:2322.25px;top:497.5px;width:2.5px;height:269.75px;background:#d5d5d5;"></div>
<div class="r" style="left:2522.25px;top:497.5px;width:2.5px;height:269.75px;background:#d5d5d5;"></div>
<div class="r" style="left:2722.25px;top:497.5px;width:2.5px;height:269.75px;background:#d5d5d5;"></div>
<div class="r" style="left:2922.75px;top:497.5px;width:2.5px;height:269.75px;background:#d5d5d5;"></div>
<div class="r" style="left:3122.25px;top:497.5px;width:2.5px;height:269.75px;background:#d5d5d5;"></div>
<div class="r" style="left:3322.25px;top:497.5px;width:2.5px;height:269.75px;background:#d5d5d5;"></div>
<div class="r" style="left:3523.25px;top:497.5px;width:2.5px;height:269.75px;background:#d5d5d5;"></div>
<div class="r" style="left:82.25px;top:404px;width:2.5px;height:93.5px;background:linear-gradient(#dadada,#b4b4b4 45%,#a6a6a6);"></div>
<div class="r" style="left:144.75px;top:404px;width:2.5px;height:93.5px;background:linear-gradient(#dadada,#b4b4b4 45%,#a6a6a6);"></div>
<div class="r" style="left:232.25px;top:404px;width:2.5px;height:93.5px;background:linear-gradient(#dadada,#b4b4b4 45%,#a6a6a6);"></div>
<div class="r" style="left:609.75px;top:404px;width:2.5px;height:93.5px;background:linear-gradient(#dadada,#b4b4b4 45%,#a6a6a6);"></div>
<div class="r" style="left:721.75px;top:404px;width:2.5px;height:93.5px;background:linear-gradient(#dadada,#b4b4b4 45%,#a6a6a6);"></div>
<div class="r" style="left:922.25px;top:404px;width:2.5px;height:93.5px;background:linear-gradient(#dadada,#b4b4b4 45%,#a6a6a6);"></div>
<div class="r" style="left:1122.75px;top:404px;width:2.5px;height:93.5px;background:linear-gradient(#dadada,#b4b4b4 45%,#a6a6a6);"></div>
<div class="r" style="left:1322.25px;top:404px;width:2.5px;height:93.5px;background:linear-gradient(#dadada,#b4b4b4 45%,#a6a6a6);"></div>
<div class="r" style="left:1522.25px;top:404px;width:2.5px;height:93.5px;background:linear-gradient(#dadada,#b4b4b4 45%,#a6a6a6);"></div>
<div class="r" style="left:1722.75px;top:404px;width:2.5px;height:93.5px;background:linear-gradient(#dadada,#b4b4b4 45%,#a6a6a6);"></div>
<div class="r" style="left:1922.75px;top:404px;width:2.5px;height:93.5px;background:linear-gradient(#dadada,#b4b4b4 45%,#a6a6a6);"></div>
<div class="r" style="left:2197.25px;top:404px;width:2.5px;height:93.5px;background:linear-gradient(#dadada,#b4b4b4 45%,#a6a6a6);"></div>
<div class="r" style="left:2259.75px;top:404px;width:2.5px;height:93.5px;background:linear-gradient(#dadada,#b4b4b4 45%,#a6a6a6);"></div>
<div class="r" style="left:2322.25px;top:404px;width:2.5px;height:93.5px;background:linear-gradient(#dadada,#b4b4b4 45%,#a6a6a6);"></div>
<div class="r" style="left:2522.25px;top:404px;width:2.5px;height:93.5px;background:linear-gradient(#dadada,#b4b4b4 45%,#a6a6a6);"></div>
<div class="r" style="left:2722.25px;top:404px;width:2.5px;height:93.5px;background:linear-gradient(#dadada,#b4b4b4 45%,#a6a6a6);"></div>
<div class="r" style="left:2922.75px;top:404px;width:2.5px;height:93.5px;background:linear-gradient(#dadada,#b4b4b4 45%,#a6a6a6);"></div>
<div class="r" style="left:3122.25px;top:404px;width:2.5px;height:93.5px;background:linear-gradient(#dadada,#b4b4b4 45%,#a6a6a6);"></div>
<div class="r" style="left:3322.25px;top:404px;width:2.5px;height:93.5px;background:linear-gradient(#dadada,#b4b4b4 45%,#a6a6a6);"></div>
<div class="r" style="left:0px;top:495px;width:3524.5px;height:2.8px;background:#b0b0b0;"></div>
<div class="r" style="left:0px;top:540.75px;width:83.5px;height:3px;background:#9c9c9c;"></div>
<div class="r" style="left:0px;top:585.5px;width:83.5px;height:3px;background:#9c9c9c;"></div>
<div class="r" style="left:0px;top:630.25px;width:83.5px;height:3px;background:#9c9c9c;"></div>
<div class="r" style="left:0px;top:675px;width:83.5px;height:3px;background:#9c9c9c;"></div>
<div class="r" style="left:0px;top:719.75px;width:83.5px;height:3px;background:#9c9c9c;"></div>
<div class="r" style="left:0px;top:764.5px;width:83.5px;height:3px;background:#c4c4c4;"></div>
<div class="r" style="left:82.2px;top:497.5px;width:2.6px;height:268.5px;background:#a0a0a0;"></div>
<div class="r" style="left:80.5px;top:497.5px;width:4.5px;height:43.75px;background:#1f7246;"></div>
<svg class="i" style="left:45px;top:460.5px" width="28" height="27" viewBox="0 0 28 27"><polygon points="28,0 28,27 0,27" fill="#bdbdbd"/></svg>
<span class="t" style="top:433.91px;font-size:32px;color:#111;left:155.00px;transform-origin:0 0;transform:scaleX(0.8076);-webkit-text-stroke:0.4px;">Ehd</span>
<span class="t" style="top:433.91px;font-size:32px;color:#111;left:501.00px;transform-origin:0 0;transform:scaleX(0.7792);-webkit-text-stroke:0.4px;">Uurnorm</span>
<span class="t" style="top:418.91px;font-size:32px;color:#111;left:619.30px;transform-origin:0 0;transform:scaleX(0.8098);-webkit-text-stroke:0.4px;">Uurloon</span>
<span class="t" style="top:451.41px;font-size:32px;color:#111;left:619.30px;transform-origin:0 0;transform:scaleX(0.8453);-webkit-text-stroke:0.4px;">code</span>
<span class="t" style="top:433.91px;font-size:32px;color:#111;left:733.50px;transform-origin:0 0;transform:scaleX(0.8226);-webkit-text-stroke:0.4px;">IB.nl code</span>
<span class="t" style="top:433.91px;font-size:32px;color:#111;left:1056.00px;transform-origin:0 0;transform:scaleX(0.8021);-webkit-text-stroke:0.4px;">Uren</span>
<span class="t" style="top:433.91px;font-size:32px;color:#111;left:1160.80px;transform-origin:0 0;transform:scaleX(0.7869);-webkit-text-stroke:0.4px;">Materiaalprijs</span>
<span class="t" style="top:433.91px;font-size:32px;color:#111;left:1360.20px;transform-origin:0 0;transform:scaleX(0.7916);-webkit-text-stroke:0.4px;">Materieelprijs</span>
<span class="t" style="top:433.91px;font-size:32px;color:#111;left:1571.60px;transform-origin:0 0;transform:scaleX(0.8250);-webkit-text-stroke:0.4px;">Onderaann.</span>
<span class="t" style="top:433.91px;font-size:32px;color:#111;left:1757.60px;transform-origin:0 0;transform:scaleX(0.7993);-webkit-text-stroke:0.4px;">Eenheidsprijs</span>
<span class="t" style="top:433.91px;font-size:32px;color:#111;left:2084.60px;transform-origin:0 0;transform:scaleX(0.8388);-webkit-text-stroke:0.4px;">TOTAAL</span>
<span class="t" style="top:433.91px;font-size:32px;color:#111;left:2209.30px;transform-origin:0 0;transform:scaleX(0.7894);-webkit-text-stroke:0.4px;">Act</span>
<span class="t" style="top:433.91px;font-size:32px;color:#111;left:2287.90px;transform-origin:0 0;transform:scaleX(0.7438);-webkit-text-stroke:0.4px;">Pr</span>
<span class="t" style="top:433.91px;font-size:32px;color:#111;left:2333.00px;transform-origin:0 0;transform:scaleX(0.8181);-webkit-text-stroke:0.4px;">Levensfases</span>
<span class="t" style="top:433.91px;font-size:32px;color:#111;left:2657.70px;transform-origin:0 0;transform:scaleX(0.8257);-webkit-text-stroke:0.4px;">CO2</span>
<span class="t" style="top:433.91px;font-size:32px;color:#111;left:2865.60px;transform-origin:0 0;transform:scaleX(0.8006);-webkit-text-stroke:0.4px;">MKI</span>
<span class="t" style="top:418.91px;font-size:32px;color:#111;left:2978.00px;transform-origin:0 0;transform:scaleX(0.8150);-webkit-text-stroke:0.4px;">Bruto totaal</span>
<span class="t" style="top:451.41px;font-size:32px;color:#111;left:3058.00px;transform-origin:0 0;transform:scaleX(0.8120);-webkit-text-stroke:0.4px;">CO2</span>
<span class="t" style="top:418.91px;font-size:32px;color:#111;left:3178.30px;transform-origin:0 0;transform:scaleX(0.8144);-webkit-text-stroke:0.4px;">Bruto totaal</span>
<span class="t" style="top:451.41px;font-size:32px;color:#111;left:3266.00px;transform-origin:0 0;transform:scaleX(0.8006);-webkit-text-stroke:0.4px;">MKI</span>
<span class="t" style="top:433.91px;font-size:32px;color:#111;left:3386.00px;transform-origin:0 0;transform:scaleX(0.8040);-webkit-text-stroke:0.4px;">Milieukaart</span>
<span class="t" style="top:503.91px;font-size:32px;color:#333;left:32.04px;transform-origin:0 0;transform:scaleX(0.8380);">1</span>
<span class="t" style="top:498.91px;font-size:32px;color:#000;font-weight:bold;left:153.50px;transform-origin:0 0;transform:scaleX(0.8800);">m2</span>
<span class="t" style="top:498.91px;font-size:32px;color:#000;font-weight:bold;right:3210.00px;transform-origin:100% 0;transform:scaleX(0.8650);">0,16</span>
<span class="t" style="top:498.91px;font-size:32px;color:#000;font-weight:bold;right:2697.00px;transform-origin:100% 0;transform:scaleX(0.8650);">16,44</span>
<span class="t" style="top:498.91px;font-size:32px;color:#000;font-weight:bold;right:2497.50px;transform-origin:100% 0;transform:scaleX(0.8650);">43,44</span>
<span class="t" style="top:498.91px;font-size:32px;color:#000;font-weight:bold;right:2297.50px;transform-origin:100% 0;transform:scaleX(0.8650);">6,60</span>
<span class="t" style="top:498.91px;font-size:32px;color:#000;font-weight:bold;right:1897.00px;transform-origin:100% 0;transform:scaleX(0.8650);">56,37</span>
<span class="t" style="top:498.91px;font-size:32px;color:#000;font-weight:bold;right:1622.50px;transform-origin:100% 0;transform:scaleX(0.8650);">5.636,99</span>
<span class="t" style="top:498.91px;font-size:32px;color:#000;font-weight:bold;right:697.50px;transform-origin:100% 0;transform:scaleX(0.8650);">5672,28</span>
<span class="t" style="top:498.91px;font-size:32px;color:#000;font-weight:bold;right:497.50px;transform-origin:100% 0;transform:scaleX(0.8650);">1014,33</span>
<span class="t" style="top:548.66px;font-size:32px;color:#333;left:32.04px;transform-origin:0 0;transform:scaleX(0.8380);">2</span>
<span class="t" style="top:543.66px;font-size:32px;color:#000;left:153.50px;transform-origin:0 0;transform:scaleX(0.8380);">m1</span>
<span class="t" style="top:543.66px;font-size:32px;color:#000;right:2497.50px;transform-origin:100% 0;transform:scaleX(0.8380);">10,00</span>
<span class="t" style="top:543.66px;font-size:32px;color:#000;right:1897.00px;transform-origin:100% 0;transform:scaleX(0.8380);">10,00</span>
<span class="t" style="top:543.66px;font-size:32px;color:#000;right:1622.50px;transform-origin:100% 0;transform:scaleX(0.8380);">5,00</span>
<span class="t" style="top:543.66px;font-size:32px;color:#000;right:1097.50px;transform-origin:100% 0;transform:scaleX(0.8380);">113,45</span>
<span class="t" style="top:543.66px;font-size:32px;color:#000;right:897.00px;transform-origin:100% 0;transform:scaleX(0.8380);">20,29</span>
<span class="t" style="top:543.66px;font-size:32px;color:#000;right:697.50px;transform-origin:100% 0;transform:scaleX(0.8380);">56,72</span>
<span class="t" style="top:543.66px;font-size:32px;color:#000;right:497.50px;transform-origin:100% 0;transform:scaleX(0.8380);">10,14</span>
<div class="r" style="left:3324.8px;top:543.75px;width:7.7px;height:7.3px;background:#f07a62;opacity:1.0"></div>
<div class="r" style="left:3324.8px;top:551.05px;width:7.7px;height:7px;background:#80d5cd;opacity:1.0"></div>
<div class="r" style="left:3324.8px;top:558.05px;width:7.7px;height:7.2px;background:#d900e9;opacity:1.0"></div>
<svg class="i" style="left:3332.8px;top:550.75px" width="33" height="33" viewBox="0 0 33 33"><circle cx="16.5" cy="16.5" r="15.5" fill="#82d5cd" stroke="#8a8f8f" stroke-width="1.6"/><path d="M3,12 C6,4 20,0 27,6 L22,12 L16,18 L10,12 L8,6 L5,16 Z" fill="#dcf5f5"/><path d="M1.5,16 L5,15 L8,5 L11,14 L17,18 L19,22 L15,26 L21,24 L22,30 C14,34 3,28 1.5,16 Z" fill="#3f6363"/><path d="M23,9 L26,8 L27,12 L23,12 Z" fill="#dcf5f5"/></svg>
<span class="t" style="top:593.41px;font-size:32px;color:#333;left:32.04px;transform-origin:0 0;transform:scaleX(0.8380);">3</span>
<span class="t" style="top:588.41px;font-size:32px;color:#000;font-weight:bold;left:153.50px;transform-origin:0 0;transform:scaleX(0.8800);">m2</span>
<span class="t" style="top:588.41px;font-size:32px;color:#000;font-weight:bold;right:3210.00px;transform-origin:100% 0;transform:scaleX(0.8650);">0,16</span>
<span class="t" style="top:588.41px;font-size:32px;color:#000;font-weight:bold;right:2697.00px;transform-origin:100% 0;transform:scaleX(0.8650);">16,28</span>
<span class="t" style="top:588.41px;font-size:32px;color:#000;font-weight:bold;right:2497.50px;transform-origin:100% 0;transform:scaleX(0.8650);">40,94</span>
<span class="t" style="top:588.41px;font-size:32px;color:#000;font-weight:bold;right:2297.50px;transform-origin:100% 0;transform:scaleX(0.8650);">0,89</span>
<span class="t" style="top:588.41px;font-size:32px;color:#000;font-weight:bold;right:1897.00px;transform-origin:100% 0;transform:scaleX(0.8650);">48,16</span>
<span class="t" style="top:588.41px;font-size:32px;color:#000;font-weight:bold;right:1622.50px;transform-origin:100% 0;transform:scaleX(0.8650);">4.767,72</span>
<span class="t" style="top:588.41px;font-size:32px;color:#000;font-weight:bold;right:697.50px;transform-origin:100% 0;transform:scaleX(0.8650);">2807,78</span>
<span class="t" style="top:588.41px;font-size:32px;color:#000;font-weight:bold;right:497.50px;transform-origin:100% 0;transform:scaleX(0.8650);">502,09</span>
<span class="t" style="top:638.16px;font-size:32px;color:#333;left:32.04px;transform-origin:0 0;transform:scaleX(0.8380);">4</span>
<span class="t" style="top:633.16px;font-size:32px;color:#000;left:153.50px;transform-origin:0 0;transform:scaleX(0.8380);">m1</span>
<span class="t" style="top:633.16px;font-size:32px;color:#000;right:2497.50px;transform-origin:100% 0;transform:scaleX(0.8380);">10,00</span>
<span class="t" style="top:633.16px;font-size:32px;color:#000;right:1897.00px;transform-origin:100% 0;transform:scaleX(0.8380);">10,00</span>
<span class="t" style="top:633.16px;font-size:32px;color:#000;right:1622.50px;transform-origin:100% 0;transform:scaleX(0.8380);">2,50</span>
<span class="t" style="top:633.16px;font-size:32px;color:#000;right:1097.50px;transform-origin:100% 0;transform:scaleX(0.8380);">113,45</span>
<span class="t" style="top:633.16px;font-size:32px;color:#000;right:897.00px;transform-origin:100% 0;transform:scaleX(0.8380);">20,29</span>
<span class="t" style="top:633.16px;font-size:32px;color:#000;right:697.50px;transform-origin:100% 0;transform:scaleX(0.8380);">28,36</span>
<span class="t" style="top:633.16px;font-size:32px;color:#000;right:497.50px;transform-origin:100% 0;transform:scaleX(0.8380);">5,07</span>
<div class="r" style="left:3324.8px;top:633.25px;width:7.7px;height:7.3px;background:#f07a62;opacity:1.0"></div>
<div class="r" style="left:3324.8px;top:640.55px;width:7.7px;height:7px;background:#80d5cd;opacity:1.0"></div>
<div class="r" style="left:3324.8px;top:647.55px;width:7.7px;height:7.2px;background:#d900e9;opacity:1.0"></div>
<svg class="i" style="left:3332.8px;top:640.25px" width="33" height="33" viewBox="0 0 33 33"><circle cx="16.5" cy="16.5" r="15.5" fill="#82d5cd" stroke="#8a8f8f" stroke-width="1.6"/><path d="M3,12 C6,4 20,0 27,6 L22,12 L16,18 L10,12 L8,6 L5,16 Z" fill="#dcf5f5"/><path d="M1.5,16 L5,15 L8,5 L11,14 L17,18 L19,22 L15,26 L21,24 L22,30 C14,34 3,28 1.5,16 Z" fill="#3f6363"/><path d="M23,9 L26,8 L27,12 L23,12 Z" fill="#dcf5f5"/></svg>
<span class="t" style="top:682.91px;font-size:32px;color:#333;left:32.04px;transform-origin:0 0;transform:scaleX(0.8380);">5</span>
<span class="t" style="top:677.91px;font-size:32px;color:#000;font-weight:bold;left:153.50px;transform-origin:0 0;transform:scaleX(0.8800);">m2</span>
<span class="t" style="top:677.91px;font-size:32px;color:#000;font-weight:bold;right:3210.00px;transform-origin:100% 0;transform:scaleX(0.8650);">0,16</span>
<span class="t" style="top:677.91px;font-size:32px;color:#000;font-weight:bold;right:2697.00px;transform-origin:100% 0;transform:scaleX(0.8650);">16,44</span>
<span class="t" style="top:677.91px;font-size:32px;color:#000;font-weight:bold;right:2497.50px;transform-origin:100% 0;transform:scaleX(0.8650);">43,44</span>
<span class="t" style="top:677.91px;font-size:32px;color:#000;font-weight:bold;right:2297.50px;transform-origin:100% 0;transform:scaleX(0.8650);">6,60</span>
<span class="t" style="top:677.91px;font-size:32px;color:#000;font-weight:bold;right:1897.00px;transform-origin:100% 0;transform:scaleX(0.8650);">56,37</span>
<span class="t" style="top:677.91px;font-size:32px;color:#000;font-weight:bold;right:1622.50px;transform-origin:100% 0;transform:scaleX(0.8650);">5.636,99</span>
<span class="t" style="top:677.91px;font-size:32px;color:#000;font-weight:bold;right:697.50px;transform-origin:100% 0;transform:scaleX(0.8650);">5672,28</span>
<span class="t" style="top:677.91px;font-size:32px;color:#000;font-weight:bold;right:497.50px;transform-origin:100% 0;transform:scaleX(0.8650);">1014,33</span>
<span class="t" style="top:727.66px;font-size:32px;color:#333;left:32.04px;transform-origin:0 0;transform:scaleX(0.8380);">6</span>
<span class="t" style="top:722.66px;font-size:32px;color:#000;left:153.50px;transform-origin:0 0;transform:scaleX(0.8380);">m1</span>
<span class="t" style="top:722.66px;font-size:32px;color:#000;right:2497.50px;transform-origin:100% 0;transform:scaleX(0.8380);">10,00</span>
<span class="t" style="top:722.66px;font-size:32px;color:#000;right:1897.00px;transform-origin:100% 0;transform:scaleX(0.8380);">10,00</span>
<span class="t" style="top:722.66px;font-size:32px;color:#000;right:1622.50px;transform-origin:100% 0;transform:scaleX(0.8380);">5,00</span>
<span class="t" style="top:722.66px;font-size:32px;color:#000;right:1097.50px;transform-origin:100% 0;transform:scaleX(0.8380);">113,45</span>
<span class="t" style="top:722.66px;font-size:32px;color:#000;right:897.00px;transform-origin:100% 0;transform:scaleX(0.8380);">20,29</span>
<span class="t" style="top:722.66px;font-size:32px;color:#000;right:697.50px;transform-origin:100% 0;transform:scaleX(0.8380);">56,72</span>
<span class="t" style="top:722.66px;font-size:32px;color:#000;right:497.50px;transform-origin:100% 0;transform:scaleX(0.8380);">10,14</span>
<div class="r" style="left:3324.8px;top:722.75px;width:7.7px;height:7.3px;background:#f07a62;opacity:1.0"></div>
<div class="r" style="left:3324.8px;top:730.05px;width:7.7px;height:7px;background:#80d5cd;opacity:1.0"></div>
<div class="r" style="left:3324.8px;top:737.05px;width:7.7px;height:7.2px;background:#d900e9;opacity:1.0"></div>
<svg class="i" style="left:3332.8px;top:729.75px" width="33" height="33" viewBox="0 0 33 33"><circle cx="16.5" cy="16.5" r="15.5" fill="#82d5cd" stroke="#8a8f8f" stroke-width="1.6"/><path d="M3,12 C6,4 20,0 27,6 L22,12 L16,18 L10,12 L8,6 L5,16 Z" fill="#dcf5f5"/><path d="M1.5,16 L5,15 L8,5 L11,14 L17,18 L19,22 L15,26 L21,24 L22,30 C14,34 3,28 1.5,16 Z" fill="#3f6363"/><path d="M23,9 L26,8 L27,12 L23,12 Z" fill="#dcf5f5"/></svg>
<div class="r" style="left:0px;top:823.5px;width:3811px;height:2.3px;background:#9b9b9b;"></div>
<div class="r" style="left:0px;top:825.8px;width:3811px;height:5px;background:#e4e4e4;"></div>
<div class="r" style="left:0px;top:830.6px;width:3811px;height:38px;background:#dbdbdb;"></div>
<div class="r" style="left:668.5px;top:830.6px;width:3118.5px;height:38px;background:#fff;border:2.8px solid #b1b1b1;border-right-width:3.8px;"></div>
<div class="r" style="left:8.5px;top:831.6px;width:36px;height:36px;background:#fff;border:2.5px solid #bdbdbd;"></div>
<div class="r" style="left:3786.8px;top:833.4px;width:30px;height:32.2px;background:#fff;"></div>
<div class="r" style="left:3783px;top:830.6px;width:30px;height:2.8px;background:#b1b1b1;"></div>
<div class="r" style="left:3783px;top:865.8px;width:30px;height:2.8px;background:#b1b1b1;"></div>
<div class="r" style="left:-3px;top:826px;width:10px;height:48px;background:#e8e8e8;border:2.5px solid #a8a8a8;"></div>
<svg class="i" style="left:22.8px;top:838.4px" width="12.8" height="22.6" viewBox="0 0 12.8 22.6"><polygon points="12.8,0 12.8,22.6 0,11.3" fill="#7a7a7a"/></svg>
<svg class="i" style="left:3797.5px;top:838.5px" width="12.5" height="23" viewBox="0 0 12.5 23"><polygon points="0,0 0,23 12.5,11.5" fill="#7a7a7a"/></svg>
<div class="r" style="left:0px;top:868.4px;width:3811px;height:10px;background:#e4e4e4;"></div>
<div class="r" style="left:0px;top:878.4px;width:3811px;height:10px;background:linear-gradient(#fafafa,#ececec);"></div>
<div class="r" style="left:0px;top:888.2px;width:3811px;height:6px;background:linear-gradient(#9a9a9a,#707070 60%,#8c8c8c);"></div>
<div class="r" style="left:0px;top:893.8px;width:64.5px;height:49.7px;background:#eaeaea;"></div>
<div class="r" style="left:64.5px;top:893.8px;width:3290px;height:45.2px;background:linear-gradient(#d7d7d7,#d0d0d0);"></div>
<div class="r" style="left:334.6px;top:893.8px;width:1.9px;height:45.2px;background:#a8a8a8;"></div>
<div class="r" style="left:1017.1px;top:893.8px;width:1.9px;height:45.2px;background:#a8a8a8;"></div>
<div class="r" style="left:1272.6px;top:893.8px;width:1.9px;height:45.2px;background:#a8a8a8;"></div>
<div class="r" style="left:1352.6px;top:893.8px;width:1.9px;height:45.2px;background:#a8a8a8;"></div>
<div class="r" style="left:1477.1px;top:893.8px;width:1.9px;height:45.2px;background:#a8a8a8;"></div>
<div class="r" style="left:1569.6px;top:893.8px;width:1.9px;height:45.2px;background:#a8a8a8;"></div>
<div class="r" style="left:1768.1px;top:893.8px;width:1.9px;height:45.2px;background:#a8a8a8;"></div>
<div class="r" style="left:1965.1px;top:893.8px;width:1.9px;height:45.2px;background:#a8a8a8;"></div>
<div class="r" style="left:2137.6px;top:893.8px;width:1.9px;height:45.2px;background:#a8a8a8;"></div>
<div class="r" style="left:2310.1px;top:893.8px;width:1.9px;height:45.2px;background:#a8a8a8;"></div>
<div class="r" style="left:2553.1px;top:893.8px;width:1.9px;height:45.2px;background:#a8a8a8;"></div>
<div class="r" style="left:2752.6px;top:893.8px;width:1.9px;height:45.2px;background:#a8a8a8;"></div>
<div class="r" style="left:2952.1px;top:893.8px;width:1.9px;height:45.2px;background:#a8a8a8;"></div>
<div class="r" style="left:3152.6px;top:893.8px;width:1.9px;height:45.2px;background:#a8a8a8;"></div>
<div class="r" style="left:64.5px;top:939px;width:3290px;height:4.7px;background:#217a4b;"></div>
<svg class="i" style="left:24.5px;top:905.5px" width="28" height="28" viewBox="0 0 28 28"><polygon points="28,0 28,28 0,28" fill="#c3c3c3"/></svg>
<span class="t" style="top:903.11px;font-size:30px;color:#2b896e;left:73.00px;transform-origin:0 0;transform:scaleX(0.8798);-webkit-text-stroke:0.4px;">Middelcode</span>
<span class="t" style="top:903.11px;font-size:30px;color:#2b896e;left:343.70px;transform-origin:0 0;transform:scaleX(0.8593);-webkit-text-stroke:0.4px;">Omschrijving</span>
<span class="t" style="top:903.11px;font-size:30px;color:#2b896e;left:1105.50px;transform-origin:0 0;transform:scaleX(0.8963);-webkit-text-stroke:0.4px;">Cumul. hoev.</span>
<span class="t" style="top:903.11px;font-size:30px;color:#2b896e;left:1282.30px;transform-origin:0 0;transform:scaleX(0.8558);-webkit-text-stroke:0.4px;">Ehd</span>
<span class="t" style="top:903.11px;font-size:30px;color:#2b896e;left:1405.90px;transform-origin:0 0;transform:scaleX(0.8166);-webkit-text-stroke:0.4px;">Norm</span>
<span class="t" style="top:903.11px;font-size:30px;color:#2b896e;left:1489.00px;transform-origin:0 0;transform:scaleX(0.8513);-webkit-text-stroke:0.4px;">UK</span>
<span class="t" style="top:903.11px;font-size:30px;color:#2b896e;left:1666.40px;transform-origin:0 0;transform:scaleX(0.8495);-webkit-text-stroke:0.4px;">Uurloon</span>
<span class="t" style="top:903.11px;font-size:30px;color:#2b896e;left:1848.90px;transform-origin:0 0;transform:scaleX(0.8457);-webkit-text-stroke:0.4px;">Materiaal</span>
<span class="t" style="top:903.11px;font-size:30px;color:#2b896e;left:2021.30px;transform-origin:0 0;transform:scaleX(0.8457);-webkit-text-stroke:0.4px;">Materieel</span>
<span class="t" style="top:903.11px;font-size:30px;color:#2b896e;left:2261.00px;transform-origin:0 0;transform:scaleX(0.8736);-webkit-text-stroke:0.4px;">OA</span>
<span class="t" style="top:903.11px;font-size:30px;color:#2b896e;left:2320.30px;transform-origin:0 0;transform:scaleX(0.8564);-webkit-text-stroke:0.4px;">Wijzigdatum</span>
<span class="t" style="top:903.11px;font-size:30px;color:#2b896e;left:2563.00px;transform-origin:0 0;transform:scaleX(0.8786);-webkit-text-stroke:0.4px;">Levensfases</span>
<span class="t" style="top:903.11px;font-size:30px;color:#2b896e;left:2888.40px;transform-origin:0 0;transform:scaleX(0.8629);-webkit-text-stroke:0.4px;">CO2</span>
<span class="t" style="top:903.11px;font-size:30px;color:#2b896e;left:3096.20px;transform-origin:0 0;transform:scaleX(0.8352);-webkit-text-stroke:0.4px;">MKI</span>
<span class="t" style="top:903.11px;font-size:30px;color:#2b896e;left:3216.40px;transform-origin:0 0;transform:scaleX(0.8556);-webkit-text-stroke:0.4px;">Milieukaart</span>
<div class="r" style="left:64.5px;top:943.5px;width:271px;height:1254.5px;background:#90ee90;"></div>
<div class="r" style="left:335.5px;top:943.5px;width:682.5px;height:1254.5px;background:#90ee90;"></div>
<div class="r" style="left:1018px;top:943.5px;width:244px;height:1254.5px;background:#d3d3d3;"></div>
<div class="r" style="left:1262px;top:943.5px;width:11.5px;height:1254.5px;background:#90ee90;"></div>
<div class="r" style="left:1273.5px;top:943.5px;width:80px;height:1254.5px;background:#90ee90;"></div>
<div class="r" style="left:1353.5px;top:943.5px;width:124.5px;height:1254.5px;background:#90ee90;"></div>
<div class="r" style="left:1478px;top:943.5px;width:92.5px;height:1254.5px;background:#90ee90;"></div>
<div class="r" style="left:1570.5px;top:943.5px;width:198.5px;height:1254.5px;background:#d3d3d3;"></div>
<div class="r" style="left:1769px;top:943.5px;width:197px;height:1254.5px;background:#90ee90;"></div>
<div class="r" style="left:1966px;top:943.5px;width:172.5px;height:1254.5px;background:#90ee90;"></div>
<div class="r" style="left:2138.5px;top:943.5px;width:172.5px;height:1254.5px;background:#90ee90;"></div>
<div class="r" style="left:2311px;top:943.5px;width:243px;height:1254.5px;background:#d3d3d3;"></div>
<div class="r" style="left:2554px;top:943.5px;width:199.5px;height:1254.5px;background:#d3d3d3;"></div>
<div class="r" style="left:2753.5px;top:943.5px;width:199.5px;height:1254.5px;background:#d3d3d3;"></div>
<div class="r" style="left:2953px;top:943.5px;width:200.5px;height:1254.5px;background:#d3d3d3;"></div>
<div class="r" style="left:3153.5px;top:943.5px;width:201px;height:1254.5px;background:#d3d3d3;"></div>
<div class="r" style="left:0px;top:943.5px;width:63px;height:1254.5px;background:#ececec;"></div>
<div class="r" style="left:62.5px;top:943.5px;width:2.3px;height:1254.5px;background:#c9c9c9;"></div>
<div class="r" style="left:64.5px;top:979.6px;width:953.5px;height:2.6px;background:#c2e5be;"></div>
<div class="r" style="left:1262px;top:979.6px;width:308.5px;height:2.6px;background:#c2e5be;"></div>
<div class="r" style="left:1769px;top:979.6px;width:542px;height:2.6px;background:#c2e5be;"></div>
<div class="r" style="left:0px;top:979.5px;width:62.5px;height:2.8px;background:#b3b3b3;"></div>
<div class="r" style="left:64.5px;top:1017.1px;width:953.5px;height:2.6px;background:#c2e5be;"></div>
<div class="r" style="left:1262px;top:1017.1px;width:308.5px;height:2.6px;background:#c2e5be;"></div>
<div class="r" style="left:1769px;top:1017.1px;width:542px;height:2.6px;background:#c2e5be;"></div>
<div class="r" style="left:0px;top:1017px;width:62.5px;height:2.8px;background:#b3b3b3;"></div>
<div class="r" style="left:64.5px;top:1054.6px;width:953.5px;height:2.6px;background:#c2e5be;"></div>
<div class="r" style="left:1262px;top:1054.6px;width:308.5px;height:2.6px;background:#c2e5be;"></div>
<div class="r" style="left:1769px;top:1054.6px;width:542px;height:2.6px;background:#c2e5be;"></div>
<div class="r" style="left:0px;top:1054.5px;width:62.5px;height:2.8px;background:#b3b3b3;"></div>
<div class="r" style="left:64.5px;top:1092.1px;width:953.5px;height:2.6px;background:#c2e5be;"></div>
<div class="r" style="left:1262px;top:1092.1px;width:308.5px;height:2.6px;background:#c2e5be;"></div>
<div class="r" style="left:1769px;top:1092.1px;width:542px;height:2.6px;background:#c2e5be;"></div>
<div class="r" style="left:0px;top:1092px;width:62.5px;height:2.8px;background:#b3b3b3;"></div>
<div class="r" style="left:64.5px;top:1129.6px;width:953.5px;height:2.6px;background:#c2e5be;"></div>
<div class="r" style="left:1262px;top:1129.6px;width:308.5px;height:2.6px;background:#c2e5be;"></div>
<div class="r" style="left:1769px;top:1129.6px;width:542px;height:2.6px;background:#c2e5be;"></div>
<div class="r" style="left:0px;top:1129.5px;width:62.5px;height:2.8px;background:#b3b3b3;"></div>
<div class="r" style="left:64.5px;top:1167.1px;width:953.5px;height:2.6px;background:#c2e5be;"></div>
<div class="r" style="left:1262px;top:1167.1px;width:308.5px;height:2.6px;background:#c2e5be;"></div>
<div class="r" style="left:1769px;top:1167.1px;width:542px;height:2.6px;background:#c2e5be;"></div>
<div class="r" style="left:0px;top:1167px;width:62.5px;height:2.8px;background:#b3b3b3;"></div>
<div class="r" style="left:64.5px;top:1204.6px;width:953.5px;height:2.6px;background:#c2e5be;"></div>
<div class="r" style="left:1262px;top:1204.6px;width:308.5px;height:2.6px;background:#c2e5be;"></div>
<div class="r" style="left:1769px;top:1204.6px;width:542px;height:2.6px;background:#c2e5be;"></div>
<div class="r" style="left:0px;top:1204.5px;width:62.5px;height:2.8px;background:#b3b3b3;"></div>
<div class="r" style="left:64.5px;top:1242.1px;width:953.5px;height:2.6px;background:#c2e5be;"></div>
<div class="r" style="left:1262px;top:1242.1px;width:308.5px;height:2.6px;background:#c2e5be;"></div>
<div class="r" style="left:1769px;top:1242.1px;width:542px;height:2.6px;background:#c2e5be;"></div>
<div class="r" style="left:0px;top:1242px;width:62.5px;height:2.8px;background:#b3b3b3;"></div>
<div class="r" style="left:64.5px;top:1279.6px;width:953.5px;height:2.6px;background:#c2e5be;"></div>
<div class="r" style="left:1262px;top:1279.6px;width:308.5px;height:2.6px;background:#c2e5be;"></div>
<div class="r" style="left:1769px;top:1279.6px;width:542px;height:2.6px;background:#c2e5be;"></div>
<div class="r" style="left:0px;top:1279.5px;width:62.5px;height:2.8px;background:#b3b3b3;"></div>
<div class="r" style="left:64.5px;top:1317.1px;width:953.5px;height:2.6px;background:#c2e5be;"></div>
<div class="r" style="left:1262px;top:1317.1px;width:308.5px;height:2.6px;background:#c2e5be;"></div>
<div class="r" style="left:1769px;top:1317.1px;width:542px;height:2.6px;background:#c2e5be;"></div>
<div class="r" style="left:0px;top:1317px;width:62.5px;height:2.8px;background:#b3b3b3;"></div>
<div class="r" style="left:64.5px;top:1354.6px;width:953.5px;height:2.6px;background:#c2e5be;"></div>
<div class="r" style="left:1262px;top:1354.6px;width:308.5px;height:2.6px;background:#c2e5be;"></div>
<div class="r" style="left:1769px;top:1354.6px;width:542px;height:2.6px;background:#c2e5be;"></div>
<div class="r" style="left:0px;top:1354.5px;width:62.5px;height:2.8px;background:#b3b3b3;"></div>
<div class="r" style="left:64.5px;top:1392.1px;width:953.5px;height:2.6px;background:#c2e5be;"></div>
<div class="r" style="left:1262px;top:1392.1px;width:308.5px;height:2.6px;background:#c2e5be;"></div>
<div class="r" style="left:1769px;top:1392.1px;width:542px;height:2.6px;background:#c2e5be;"></div>
<div class="r" style="left:0px;top:1392px;width:62.5px;height:2.8px;background:#b3b3b3;"></div>
<div class="r" style="left:64.5px;top:1429.6px;width:953.5px;height:2.6px;background:#c2e5be;"></div>
<div class="r" style="left:1262px;top:1429.6px;width:308.5px;height:2.6px;background:#c2e5be;"></div>
<div class="r" style="left:1769px;top:1429.6px;width:542px;height:2.6px;background:#c2e5be;"></div>
<div class="r" style="left:0px;top:1429.5px;width:62.5px;height:2.8px;background:#b3b3b3;"></div>
<div class="r" style="left:64.5px;top:1467.1px;width:953.5px;height:2.6px;background:#c2e5be;"></div>
<div class="r" style="left:1262px;top:1467.1px;width:308.5px;height:2.6px;background:#c2e5be;"></div>
<div class="r" style="left:1769px;top:1467.1px;width:542px;height:2.6px;background:#c2e5be;"></div>
<div class="r" style="left:0px;top:1467px;width:62.5px;height:2.8px;background:#b3b3b3;"></div>
<div class="r" style="left:64.5px;top:1504.6px;width:953.5px;height:2.6px;background:#c2e5be;"></div>
<div class="r" style="left:1262px;top:1504.6px;width:308.5px;height:2.6px;background:#c2e5be;"></div>
<div class="r" style="left:1769px;top:1504.6px;width:542px;height:2.6px;background:#c2e5be;"></div>
<div class="r" style="left:0px;top:1504.5px;width:62.5px;height:2.8px;background:#b3b3b3;"></div>
<div class="r" style="left:64.5px;top:1542.1px;width:953.5px;height:2.6px;background:#c2e5be;"></div>
<div class="r" style="left:1262px;top:1542.1px;width:308.5px;height:2.6px;background:#c2e5be;"></div>
<div class="r" style="left:1769px;top:1542.1px;width:542px;height:2.6px;background:#c2e5be;"></div>
<div class="r" style="left:0px;top:1542px;width:62.5px;height:2.8px;background:#b3b3b3;"></div>
<div class="r" style="left:64.5px;top:1579.6px;width:953.5px;height:2.6px;background:#c2e5be;"></div>
<div class="r" style="left:1262px;top:1579.6px;width:308.5px;height:2.6px;background:#c2e5be;"></div>
<div class="r" style="left:1769px;top:1579.6px;width:542px;height:2.6px;background:#c2e5be;"></div>
<div class="r" style="left:0px;top:1579.5px;width:62.5px;height:2.8px;background:#b3b3b3;"></div>
<div class="r" style="left:64.5px;top:1617.1px;width:953.5px;height:2.6px;background:#c2e5be;"></div>
<div class="r" style="left:1262px;top:1617.1px;width:308.5px;height:2.6px;background:#c2e5be;"></div>
<div class="r" style="left:1769px;top:1617.1px;width:542px;height:2.6px;background:#c2e5be;"></div>
<div class="r" style="left:0px;top:1617px;width:62.5px;height:2.8px;background:#b3b3b3;"></div>
<div class="r" style="left:64.5px;top:1654.6px;width:953.5px;height:2.6px;background:#c2e5be;"></div>
<div class="r" style="left:1262px;top:1654.6px;width:308.5px;height:2.6px;background:#c2e5be;"></div>
<div class="r" style="left:1769px;top:1654.6px;width:542px;height:2.6px;background:#c2e5be;"></div>
<div class="r" style="left:0px;top:1654.5px;width:62.5px;height:2.8px;background:#b3b3b3;"></div>
<div class="r" style="left:64.5px;top:1692.1px;width:953.5px;height:2.6px;background:#c2e5be;"></div>
<div class="r" style="left:1262px;top:1692.1px;width:308.5px;height:2.6px;background:#c2e5be;"></div>
<div class="r" style="left:1769px;top:1692.1px;width:542px;height:2.6px;background:#c2e5be;"></div>
<div class="r" style="left:0px;top:1692px;width:62.5px;height:2.8px;background:#b3b3b3;"></div>
<div class="r" style="left:64.5px;top:1729.6px;width:953.5px;height:2.6px;background:#c2e5be;"></div>
<div class="r" style="left:1262px;top:1729.6px;width:308.5px;height:2.6px;background:#c2e5be;"></div>
<div class="r" style="left:1769px;top:1729.6px;width:542px;height:2.6px;background:#c2e5be;"></div>
<div class="r" style="left:0px;top:1729.5px;width:62.5px;height:2.8px;background:#b3b3b3;"></div>
<div class="r" style="left:64.5px;top:1767.1px;width:953.5px;height:2.6px;background:#c2e5be;"></div>
<div class="r" style="left:1262px;top:1767.1px;width:308.5px;height:2.6px;background:#c2e5be;"></div>
<div class="r" style="left:1769px;top:1767.1px;width:542px;height:2.6px;background:#c2e5be;"></div>
<div class="r" style="left:0px;top:1767px;width:62.5px;height:2.8px;background:#b3b3b3;"></div>
<div class="r" style="left:64.5px;top:1804.6px;width:953.5px;height:2.6px;background:#c2e5be;"></div>
<div class="r" style="left:1262px;top:1804.6px;width:308.5px;height:2.6px;background:#c2e5be;"></div>
<div class="r" style="left:1769px;top:1804.6px;width:542px;height:2.6px;background:#c2e5be;"></div>
<div class="r" style="left:0px;top:1804.5px;width:62.5px;height:2.8px;background:#b3b3b3;"></div>
<div class="r" style="left:64.5px;top:1842.1px;width:953.5px;height:2.6px;background:#c2e5be;"></div>
<div class="r" style="left:1262px;top:1842.1px;width:308.5px;height:2.6px;background:#c2e5be;"></div>
<div class="r" style="left:1769px;top:1842.1px;width:542px;height:2.6px;background:#c2e5be;"></div>
<div class="r" style="left:0px;top:1842px;width:62.5px;height:2.8px;background:#b3b3b3;"></div>
<div class="r" style="left:64.5px;top:1896.1px;width:953.5px;height:2.6px;background:#c2e5be;"></div>
<div class="r" style="left:1262px;top:1896.1px;width:308.5px;height:2.6px;background:#c2e5be;"></div>
<div class="r" style="left:1769px;top:1896.1px;width:542px;height:2.6px;background:#c2e5be;"></div>
<div class="r" style="left:0px;top:1896px;width:62.5px;height:2.8px;background:#b3b3b3;"></div>
<div class="r" style="left:64.5px;top:1933.6px;width:953.5px;height:2.6px;background:#c2e5be;"></div>
<div class="r" style="left:1262px;top:1933.6px;width:308.5px;height:2.6px;background:#c2e5be;"></div>
<div class="r" style="left:1769px;top:1933.6px;width:542px;height:2.6px;background:#c2e5be;"></div>
<div class="r" style="left:0px;top:1933.5px;width:62.5px;height:2.8px;background:#b3b3b3;"></div>
<div class="r" style="left:64.5px;top:1971.1px;width:953.5px;height:2.6px;background:#c2e5be;"></div>
<div class="r" style="left:1262px;top:1971.1px;width:308.5px;height:2.6px;background:#c2e5be;"></div>
<div class="r" style="left:1769px;top:1971.1px;width:542px;height:2.6px;background:#c2e5be;"></div>
<div class="r" style="left:0px;top:1971px;width:62.5px;height:2.8px;background:#b3b3b3;"></div>
<div class="r" style="left:64.5px;top:2008.6px;width:953.5px;height:2.6px;background:#c2e5be;"></div>
<div class="r" style="left:1262px;top:2008.6px;width:308.5px;height:2.6px;background:#c2e5be;"></div>
<div class="r" style="left:1769px;top:2008.6px;width:542px;height:2.6px;background:#c2e5be;"></div>
<div class="r" style="left:0px;top:2008.5px;width:62.5px;height:2.8px;background:#b3b3b3;"></div>
<div class="r" style="left:64.5px;top:2046.1px;width:953.5px;height:2.6px;background:#c2e5be;"></div>
<div class="r" style="left:1262px;top:2046.1px;width:308.5px;height:2.6px;background:#c2e5be;"></div>
<div class="r" style="left:1769px;top:2046.1px;width:542px;height:2.6px;background:#c2e5be;"></div>
<div class="r" style="left:0px;top:2046px;width:62.5px;height:2.8px;background:#b3b3b3;"></div>
<div class="r" style="left:64.5px;top:2083.6px;width:953.5px;height:2.6px;background:#c2e5be;"></div>
<div class="r" style="left:1262px;top:2083.6px;width:308.5px;height:2.6px;background:#c2e5be;"></div>
<div class="r" style="left:1769px;top:2083.6px;width:542px;height:2.6px;background:#c2e5be;"></div>
<div class="r" style="left:0px;top:2083.5px;width:62.5px;height:2.8px;background:#b3b3b3;"></div>
<div class="r" style="left:64.5px;top:2121.1px;width:953.5px;height:2.6px;background:#c2e5be;"></div>
<div class="r" style="left:1262px;top:2121.1px;width:308.5px;height:2.6px;background:#c2e5be;"></div>
<div class="r" style="left:1769px;top:2121.1px;width:542px;height:2.6px;background:#c2e5be;"></div>
<div class="r" style="left:0px;top:2121px;width:62.5px;height:2.8px;background:#b3b3b3;"></div>
<div class="r" style="left:64.5px;top:2158.6px;width:953.5px;height:2.6px;background:#c2e5be;"></div>
<div class="r" style="left:1262px;top:2158.6px;width:308.5px;height:2.6px;background:#c2e5be;"></div>
<div class="r" style="left:1769px;top:2158.6px;width:542px;height:2.6px;background:#c2e5be;"></div>
<div class="r" style="left:0px;top:2158.5px;width:62.5px;height:2.8px;background:#b3b3b3;"></div>
<div class="r" style="left:64.5px;top:2196.1px;width:953.5px;height:2.6px;background:#c2e5be;"></div>
<div class="r" style="left:1262px;top:2196.1px;width:308.5px;height:2.6px;background:#c2e5be;"></div>
<div class="r" style="left:1769px;top:2196.1px;width:542px;height:2.6px;background:#c2e5be;"></div>
<div class="r" style="left:0px;top:2196px;width:62.5px;height:2.8px;background:#b3b3b3;"></div>
<div class="r" style="left:335px;top:943.5px;width:2.6px;height:1254.5px;background:#c2e5be;"></div>
<div class="r" style="left:1273px;top:943.5px;width:2.6px;height:1254.5px;background:#c2e5be;"></div>
<div class="r" style="left:1353px;top:943.5px;width:2.6px;height:1254.5px;background:#c2e5be;"></div>
<div class="r" style="left:1477.5px;top:943.5px;width:2.6px;height:1254.5px;background:#c2e5be;"></div>
<div class="r" style="left:1965.5px;top:943.5px;width:2.6px;height:1254.5px;background:#c2e5be;"></div>
<div class="r" style="left:2138px;top:943.5px;width:2.6px;height:1254.5px;background:#c2e5be;"></div>
<div class="r" style="left:1016.5px;top:943.5px;width:2px;height:1254.5px;background:#c2e5be;"></div>
<div class="r" style="left:3154.8px;top:1845px;width:7.7px;height:7.3px;background:#f07a62;opacity:1.0"></div>
<div class="r" style="left:3154.8px;top:1852.3px;width:7.7px;height:7px;background:#80d5cd;opacity:1.0"></div>
<div class="r" style="left:3154.8px;top:1859.3px;width:7.7px;height:7.2px;background:#d900e9;opacity:1.0"></div>
<svg class="i" style="left:3162.8px;top:1852px" width="33" height="33" viewBox="0 0 33 33"><circle cx="16.5" cy="16.5" r="15.5" fill="#82d5cd" stroke="#8a8f8f" stroke-width="1.6"/><path d="M3,12 C6,4 20,0 27,6 L22,12 L16,18 L10,12 L8,6 L5,16 Z" fill="#dcf5f5"/><path d="M1.5,16 L5,15 L8,5 L11,14 L17,18 L19,22 L15,26 L21,24 L22,30 C14,34 3,28 1.5,16 Z" fill="#3f6363"/><path d="M23,9 L26,8 L27,12 L23,12 Z" fill="#dcf5f5"/></svg>
<div class="r" style="left:335.5px;top:1843.5px;width:3019px;height:52.5px;background:rgba(120,120,120,0.32);"></div>
<div class="r" style="left:0px;top:1843.5px;width:62.5px;height:54px;background:#d6f0e2;"></div>
<div class="r" style="left:60.5px;top:1843.5px;width:4.5px;height:54px;background:#217a4b;"></div>
<div class="r" style="left:65px;top:1843.5px;width:3287.5px;height:52.5px;background:transparent;border:5.2px solid #0000fe;"></div>
<div class="r" style="left:335.5px;top:943.5px;width:681.0px;height:1254.5px;overflow:hidden;">
<span class="t" style="left:8px;top:2.21px;font-size:30px;color:#000;transform-origin:0 0;transform:scaleX(0.884)">kim stellen L67/V67 specie</span>
<span class="t" style="left:8px;top:39.71px;font-size:30px;color:#000;transform-origin:0 0;transform:scaleX(0.884)">kanaalplaat ongeïsoleerd [overspanning 8-10m], dikte 26</span>
<span class="t" style="left:8px;top:77.20px;font-size:30px;color:#000;transform-origin:0 0;transform:scaleX(0.884)">ophangbeugels tbv pasplaten lang 10cm?</span>
<span class="t" style="left:8px;top:114.70px;font-size:30px;color:#000;transform-origin:0 0;transform:scaleX(0.884)">centraaldozen ingestort 1st/10m2</span>
<span class="t" style="left:8px;top:152.20px;font-size:30px;color:#000;transform-origin:0 0;transform:scaleX(0.884)">drukvilt, dikte 10mm verdeling,egalisatie, kierdichting Nevi</span>
<span class="t" style="left:8px;top:189.70px;font-size:30px;color:#000;transform-origin:0 0;transform:scaleX(0.884)">kanaalplaatvloer klemhuur per m2 oppervlak</span>
<span class="t" style="left:8px;top:227.20px;font-size:30px;color:#000;transform-origin:0 0;transform:scaleX(0.884)">deksels voor kanaalplaatvloer dik 260mm</span>
<span class="t" style="left:8px;top:264.70px;font-size:30px;color:#000;transform-origin:0 0;transform:scaleX(0.884)">naden grindbeton 26cm/10.1ltr/m1+verls</span>
<span class="t" style="left:8px;top:302.20px;font-size:30px;color:#000;transform-origin:0 0;transform:scaleX(0.884)">balkdrager enkel, 75x175mm/71x171mm</span>
<span class="t" style="left:8px;top:339.70px;font-size:30px;color:#000;transform-origin:0 0;transform:scaleX(0.884)">haakankers Ø14.5mm ontwikkeld 500mm</span>
<span class="t" style="left:8px;top:377.20px;font-size:30px;color:#000;transform-origin:0 0;transform:scaleX(0.884)">betonmortel C20/25 milieuklasse XC1 regio Utrecht incl. 3%</span>
<span class="t" style="left:8px;top:414.70px;font-size:30px;color:#000;transform-origin:0 0;transform:scaleX(0.884)">NE vuren C/G 75x175mm +3%</span>
<span class="t" style="left:8px;top:452.20px;font-size:30px;color:#000;transform-origin:0 0;transform:scaleX(0.884)">NE vuren C/G 19x63mm +3%</span>
<span class="t" style="left:8px;top:489.70px;font-size:30px;color:#000;transform-origin:0 0;transform:scaleX(0.884)">bevestigingsmiddelen hout</span>
<span class="t" style="left:8px;top:527.20px;font-size:30px;color:#000;transform-origin:0 0;transform:scaleX(0.884)">bevestigingsmiddelen hout detail</span>
<span class="t" style="left:8px;top:564.70px;font-size:30px;color:#000;transform-origin:0 0;transform:scaleX(0.884)">okoumé multiplex wbp B/BB, dikte 15mm +5%</span>
<span class="t" style="left:8px;top:602.20px;font-size:30px;color:#000;transform-origin:0 0;transform:scaleX(0.884)">egaliseren tbv werkvloer</span>
<span class="t" style="left:8px;top:639.70px;font-size:30px;color:#000;transform-origin:0 0;transform:scaleX(0.884)">storten beton C20/25 PS-funderingsbalk kraan</span>
<span class="t" style="left:8px;top:677.20px;font-size:30px;color:#000;transform-origin:0 0;transform:scaleX(0.884)">EPS funderingmal 350x500mm/bgl 434</span>
<span class="t" style="left:8px;top:714.70px;font-size:30px;color:#000;transform-origin:0 0;transform:scaleX(0.884)">houtenregels 45x70mm (4x) EPS bekisting aanbrengen</span>
<span class="t" style="left:8px;top:752.20px;font-size:30px;color:#000;transform-origin:0 0;transform:scaleX(0.884)">stellen metselprofielen</span>
<span class="t" style="left:8px;top:789.70px;font-size:30px;color:#000;transform-origin:0 0;transform:scaleX(0.884)">vullen voegen kanaalplaatvloer</span>
<span class="t" style="left:8px;top:827.20px;font-size:30px;color:#000;transform-origin:0 0;transform:scaleX(0.884)">aanbrengen isolatieproppen in kanalen</span>
<span class="t" style="left:8px;top:864.70px;font-size:30px;color:#000;transform-origin:0 0;transform:scaleX(0.884)">leggen kanaalplaatvloer woningbouw</span>
<span class="t" style="left:8px;top:901.61px;font-size:30px;color:#4e4e4e;transform-origin:0 0;transform:scaleX(0.884)">aanbrengen bouwvilt opleg</span>
<span class="t" style="left:8px;top:956.20px;font-size:30px;color:#000;transform-origin:0 0;transform:scaleX(0.884)">aanbrengen balklaag vloer</span>
<span class="t" style="left:8px;top:993.70px;font-size:30px;color:#000;transform-origin:0 0;transform:scaleX(0.884)">aanbrengen balkdrager enkel</span>
<span class="t" style="left:8px;top:1031.20px;font-size:30px;color:#000;transform-origin:0 0;transform:scaleX(0.884)">aanbrengen booranker</span>
<span class="t" style="left:8px;top:1068.70px;font-size:30px;color:#000;transform-origin:0 0;transform:scaleX(0.884)">aanbrengen haakankers Ø14.5mm ontwikkeld 500mm</span>
<span class="t" style="left:8px;top:1106.20px;font-size:30px;color:#000;transform-origin:0 0;transform:scaleX(0.884)">aanbrengen regels windveer</span>
<span class="t" style="left:8px;top:1143.70px;font-size:30px;color:#000;transform-origin:0 0;transform:scaleX(0.884)">aanbrengen windveer</span>
<span class="t" style="left:8px;top:1181.20px;font-size:30px;color:#000;transform-origin:0 0;transform:scaleX(0.884)">kraan voor storten</span>
<span class="t" style="left:8px;top:1218.70px;font-size:30px;color:#000;transform-origin:0 0;transform:scaleX(0.884)">houtenregels 45x70mm (4x) EPS bekisting afschrijving</span>
</div>
<span class="t" style="top:948.40px;font-size:30px;color:#1c1c1c;left:16.23px;transform-origin:0 0;transform:scaleX(0.8850);">19</span>
<span class="t" style="top:945.71px;font-size:30px;color:#000;left:72.00px;transform-origin:0 0;transform:scaleX(0.8850);">X122224701</span>
<span class="t" style="top:945.71px;font-size:30px;color:#000;left:1281.00px;transform-origin:0 0;transform:scaleX(0.8850);">m1</span>
<span class="t" style="top:945.71px;font-size:30px;color:#000;right:2558.00px;transform-origin:100% 0;transform:scaleX(0.8850);">84,38</span>
<span class="t" style="top:945.71px;font-size:30px;color:#000;right:1856.00px;transform-origin:100% 0;transform:scaleX(0.8850);">0,33</span>
<span class="t" style="top:945.71px;font-size:30px;color:#000;right:1268.00px;transform-origin:100% 0;transform:scaleX(0.8640);">15-3-2012</span>
<span class="t" style="top:985.90px;font-size:30px;color:#1c1c1c;left:16.23px;transform-origin:0 0;transform:scaleX(0.8850);">20</span>
<span class="t" style="top:983.21px;font-size:30px;color:#000;left:72.00px;transform-origin:0 0;transform:scaleX(0.8850);">X123235105</span>
<span class="t" style="top:983.21px;font-size:30px;color:#000;left:1281.00px;transform-origin:0 0;transform:scaleX(0.8850);">m2</span>
<span class="t" style="top:983.21px;font-size:30px;color:#000;right:2558.00px;transform-origin:100% 0;transform:scaleX(0.8850);">299,00</span>
<span class="t" style="top:983.21px;font-size:30px;color:#000;right:1856.00px;transform-origin:100% 0;transform:scaleX(0.8850);">33,75</span>
<span class="t" style="top:983.21px;font-size:30px;color:#000;right:1268.00px;transform-origin:100% 0;transform:scaleX(0.8640);">15-3-2012</span>
<span class="t" style="top:1023.40px;font-size:30px;color:#1c1c1c;left:16.23px;transform-origin:0 0;transform:scaleX(0.8850);">21</span>
<span class="t" style="top:1020.70px;font-size:30px;color:#000;left:72.00px;transform-origin:0 0;transform:scaleX(0.8850);">X123235401</span>
<span class="t" style="top:1020.70px;font-size:30px;color:#000;left:1281.00px;transform-origin:0 0;transform:scaleX(0.8850);">st</span>
<span class="t" style="top:1020.70px;font-size:30px;color:#000;right:2558.00px;transform-origin:100% 0;transform:scaleX(0.8850);">29,90</span>
<span class="t" style="top:1020.70px;font-size:30px;color:#000;right:1856.00px;transform-origin:100% 0;transform:scaleX(0.8850);">3,68</span>
<span class="t" style="top:1020.70px;font-size:30px;color:#000;right:1268.00px;transform-origin:100% 0;transform:scaleX(0.8640);">15-3-2012</span>
<span class="t" style="top:1060.90px;font-size:30px;color:#1c1c1c;left:16.23px;transform-origin:0 0;transform:scaleX(0.8850);">22</span>
<span class="t" style="top:1058.20px;font-size:30px;color:#000;left:72.00px;transform-origin:0 0;transform:scaleX(0.8850);">X123235501</span>
<span class="t" style="top:1058.20px;font-size:30px;color:#000;left:1281.00px;transform-origin:0 0;transform:scaleX(0.8850);">st</span>
<span class="t" style="top:1058.20px;font-size:30px;color:#000;right:2558.00px;transform-origin:100% 0;transform:scaleX(0.8850);">29,90</span>
<span class="t" style="top:1058.20px;font-size:30px;color:#000;right:1856.00px;transform-origin:100% 0;transform:scaleX(0.8850);">2,27</span>
<span class="t" style="top:1058.20px;font-size:30px;color:#000;right:1268.00px;transform-origin:100% 0;transform:scaleX(0.8640);">15-3-2012</span>
<span class="t" style="top:1098.40px;font-size:30px;color:#1c1c1c;left:16.23px;transform-origin:0 0;transform:scaleX(0.8850);">23</span>
<span class="t" style="top:1095.70px;font-size:30px;color:#000;left:72.00px;transform-origin:0 0;transform:scaleX(0.8850);">X123238003</span>
<span class="t" style="top:1095.70px;font-size:30px;color:#000;left:1281.00px;transform-origin:0 0;transform:scaleX(0.8850);">m2</span>
<span class="t" style="top:1095.70px;font-size:30px;color:#000;right:2558.00px;transform-origin:100% 0;transform:scaleX(0.8850);">82,23</span>
<span class="t" style="top:1095.70px;font-size:30px;color:#000;right:1856.00px;transform-origin:100% 0;transform:scaleX(0.8850);">8,39</span>
<span class="t" style="top:1095.70px;font-size:30px;color:#000;right:1268.00px;transform-origin:100% 0;transform:scaleX(0.8640);">15-3-2012</span>
<span class="t" style="top:1135.90px;font-size:30px;color:#1c1c1c;left:16.23px;transform-origin:0 0;transform:scaleX(0.8850);">24</span>
<span class="t" style="top:1133.20px;font-size:30px;color:#000;left:72.00px;transform-origin:0 0;transform:scaleX(0.8850);">X123238208</span>
<span class="t" style="top:1133.20px;font-size:30px;color:#000;left:1281.00px;transform-origin:0 0;transform:scaleX(0.8850);">m2</span>
<span class="t" style="top:1133.20px;font-size:30px;color:#000;right:2558.00px;transform-origin:100% 0;transform:scaleX(0.8850);">299,00</span>
<span class="t" style="top:1133.20px;font-size:30px;color:#000;right:1856.00px;transform-origin:100% 0;transform:scaleX(0.8850);">0,52</span>
<span class="t" style="top:1133.20px;font-size:30px;color:#000;right:1268.00px;transform-origin:100% 0;transform:scaleX(0.8640);">15-3-2012</span>
<span class="t" style="top:1173.40px;font-size:30px;color:#1c1c1c;left:16.23px;transform-origin:0 0;transform:scaleX(0.8850);">25</span>
<span class="t" style="top:1170.70px;font-size:30px;color:#000;left:72.00px;transform-origin:0 0;transform:scaleX(0.8850);">X123238215</span>
<span class="t" style="top:1170.70px;font-size:30px;color:#000;left:1281.00px;transform-origin:0 0;transform:scaleX(0.8850);">st</span>
<span class="t" style="top:1170.70px;font-size:30px;color:#000;right:2558.00px;transform-origin:100% 0;transform:scaleX(0.8850);">331,89</span>
<span class="t" style="top:1170.70px;font-size:30px;color:#000;right:1856.00px;transform-origin:100% 0;transform:scaleX(0.8850);">0,47</span>
<span class="t" style="top:1170.70px;font-size:30px;color:#000;right:1268.00px;transform-origin:100% 0;transform:scaleX(0.8640);">15-3-2012</span>
<span class="t" style="top:1210.90px;font-size:30px;color:#1c1c1c;left:16.23px;transform-origin:0 0;transform:scaleX(0.8850);">26</span>
<span class="t" style="top:1208.20px;font-size:30px;color:#000;left:72.00px;transform-origin:0 0;transform:scaleX(0.8850);">X123238404</span>
<span class="t" style="top:1208.20px;font-size:30px;color:#000;left:1281.00px;transform-origin:0 0;transform:scaleX(0.8850);">m3</span>
<span class="t" style="top:1208.20px;font-size:30px;color:#000;right:2558.00px;transform-origin:100% 0;transform:scaleX(0.8850);">2,63</span>
<span class="t" style="top:1208.20px;font-size:30px;color:#000;right:1856.00px;transform-origin:100% 0;transform:scaleX(0.8850);">84,70</span>
<span class="t" style="top:1208.20px;font-size:30px;color:#000;right:1268.00px;transform-origin:100% 0;transform:scaleX(0.8640);">25-5-2011</span>
<span class="t" style="top:1248.40px;font-size:30px;color:#1c1c1c;left:16.23px;transform-origin:0 0;transform:scaleX(0.8850);">27</span>
<span class="t" style="top:1245.70px;font-size:30px;color:#000;left:72.00px;transform-origin:0 0;transform:scaleX(0.8850);">X127244204</span>
<span class="t" style="top:1245.70px;font-size:30px;color:#000;left:1281.00px;transform-origin:0 0;transform:scaleX(0.8850);">st</span>
<span class="t" style="top:1245.70px;font-size:30px;color:#000;right:2558.00px;transform-origin:100% 0;transform:scaleX(0.8850);">1.575,00</span>
<span class="t" style="top:1245.70px;font-size:30px;color:#000;right:1856.00px;transform-origin:100% 0;transform:scaleX(0.8850);">2,35</span>
<span class="t" style="top:1245.70px;font-size:30px;color:#000;right:1268.00px;transform-origin:100% 0;transform:scaleX(0.8640);">25-5-2011</span>
<span class="t" style="top:1285.90px;font-size:30px;color:#1c1c1c;left:16.23px;transform-origin:0 0;transform:scaleX(0.8850);">28</span>
<span class="t" style="top:1283.20px;font-size:30px;color:#000;left:72.00px;transform-origin:0 0;transform:scaleX(0.8850);">X127244221</span>
<span class="t" style="top:1283.20px;font-size:30px;color:#000;left:1281.00px;transform-origin:0 0;transform:scaleX(0.8850);">st</span>
<span class="t" style="top:1283.20px;font-size:30px;color:#000;right:2558.00px;transform-origin:100% 0;transform:scaleX(0.8850);">15,00</span>
<span class="t" style="top:1283.20px;font-size:30px;color:#000;right:1856.00px;transform-origin:100% 0;transform:scaleX(0.8850);">1,52</span>
<span class="t" style="top:1283.20px;font-size:30px;color:#000;right:1268.00px;transform-origin:100% 0;transform:scaleX(0.8640);">15-3-2012</span>
<span class="t" style="top:1323.40px;font-size:30px;color:#1c1c1c;left:16.23px;transform-origin:0 0;transform:scaleX(0.8850);">29</span>
<span class="t" style="top:1320.70px;font-size:30px;color:#000;left:72.00px;transform-origin:0 0;transform:scaleX(0.8850);">X128213003</span>
<span class="t" style="top:1320.70px;font-size:30px;color:#000;left:1281.00px;transform-origin:0 0;transform:scaleX(0.8850);">m3</span>
<span class="t" style="top:1320.70px;font-size:30px;color:#000;right:2558.00px;transform-origin:100% 0;transform:scaleX(0.8850);">13,52</span>
<span class="t" style="top:1320.70px;font-size:30px;color:#000;right:1856.00px;transform-origin:100% 0;transform:scaleX(0.8850);">77,90</span>
<span class="t" style="top:1320.70px;font-size:30px;color:#000;right:1268.00px;transform-origin:100% 0;transform:scaleX(0.8640);">25-5-2011</span>
<span class="t" style="top:1360.90px;font-size:30px;color:#1c1c1c;left:16.23px;transform-origin:0 0;transform:scaleX(0.8850);">30</span>
<span class="t" style="top:1358.20px;font-size:30px;color:#000;left:72.00px;transform-origin:0 0;transform:scaleX(0.8850);">X128241014</span>
<span class="t" style="top:1358.20px;font-size:30px;color:#000;left:1281.00px;transform-origin:0 0;transform:scaleX(0.8850);">m1</span>
<span class="t" style="top:1358.20px;font-size:30px;color:#000;right:2558.00px;transform-origin:100% 0;transform:scaleX(0.8850);">77,25</span>
<span class="t" style="top:1358.20px;font-size:30px;color:#000;right:1856.00px;transform-origin:100% 0;transform:scaleX(0.8850);">4,08</span>
<span class="t" style="top:1358.20px;font-size:30px;color:#000;right:1268.00px;transform-origin:100% 0;transform:scaleX(0.8640);">3-7-2013</span>
<span class="t" style="top:1398.40px;font-size:30px;color:#1c1c1c;left:16.23px;transform-origin:0 0;transform:scaleX(0.8850);">31</span>
<span class="t" style="top:1395.70px;font-size:30px;color:#000;left:72.00px;transform-origin:0 0;transform:scaleX(0.8850);">X128241062</span>
<span class="t" style="top:1395.70px;font-size:30px;color:#000;left:1281.00px;transform-origin:0 0;transform:scaleX(0.8850);">m1</span>
<span class="t" style="top:1395.70px;font-size:30px;color:#000;right:2558.00px;transform-origin:100% 0;transform:scaleX(0.8850);">72,10</span>
<span class="t" style="top:1395.70px;font-size:30px;color:#000;right:1856.00px;transform-origin:100% 0;transform:scaleX(0.8850);">0,76</span>
<span class="t" style="top:1395.70px;font-size:30px;color:#000;right:1268.00px;transform-origin:100% 0;transform:scaleX(0.8640);">15-3-2012</span>
<span class="t" style="top:1435.90px;font-size:30px;color:#1c1c1c;left:16.23px;transform-origin:0 0;transform:scaleX(0.8850);">32</span>
<span class="t" style="top:1433.20px;font-size:30px;color:#000;left:72.00px;transform-origin:0 0;transform:scaleX(0.8850);">X128245001</span>
<span class="t" style="top:1433.20px;font-size:30px;color:#000;left:1281.00px;transform-origin:0 0;transform:scaleX(0.8850);">m2</span>
<span class="t" style="top:1433.20px;font-size:30px;color:#000;right:2558.00px;transform-origin:100% 0;transform:scaleX(0.8850);">75,00</span>
<span class="t" style="top:1433.20px;font-size:30px;color:#000;right:1856.00px;transform-origin:100% 0;transform:scaleX(0.8850);">0,82</span>
<span class="t" style="top:1433.20px;font-size:30px;color:#000;right:1268.00px;transform-origin:100% 0;transform:scaleX(0.8640);">15-3-2012</span>
<span class="t" style="top:1473.40px;font-size:30px;color:#1c1c1c;left:16.23px;transform-origin:0 0;transform:scaleX(0.8850);">33</span>
<span class="t" style="top:1470.70px;font-size:30px;color:#000;left:72.00px;transform-origin:0 0;transform:scaleX(0.8850);">X128245006</span>
<span class="t" style="top:1470.70px;font-size:30px;color:#000;left:1281.00px;transform-origin:0 0;transform:scaleX(0.8850);">m1</span>
<span class="t" style="top:1470.70px;font-size:30px;color:#000;right:2558.00px;transform-origin:100% 0;transform:scaleX(0.8850);">35,00</span>
<span class="t" style="top:1470.70px;font-size:30px;color:#000;right:1856.00px;transform-origin:100% 0;transform:scaleX(0.8850);">2,16</span>
<span class="t" style="top:1470.70px;font-size:30px;color:#000;right:1268.00px;transform-origin:100% 0;transform:scaleX(0.8640);">15-3-2012</span>
<span class="t" style="top:1510.90px;font-size:30px;color:#1c1c1c;left:16.23px;transform-origin:0 0;transform:scaleX(0.8850);">34</span>
<span class="t" style="top:1508.20px;font-size:30px;color:#000;left:72.00px;transform-origin:0 0;transform:scaleX(0.8850);">X128451406</span>
<span class="t" style="top:1508.20px;font-size:30px;color:#000;left:1281.00px;transform-origin:0 0;transform:scaleX(0.8850);">m2</span>
<span class="t" style="top:1508.20px;font-size:30px;color:#000;right:2558.00px;transform-origin:100% 0;transform:scaleX(0.8850);">3,68</span>
<span class="t" style="top:1508.20px;font-size:30px;color:#000;right:1856.00px;transform-origin:100% 0;transform:scaleX(0.8850);">19,15</span>
<span class="t" style="top:1508.20px;font-size:30px;color:#000;right:1268.00px;transform-origin:100% 0;transform:scaleX(0.8640);">3-7-2013</span>
<span class="t" style="top:1548.40px;font-size:30px;color:#1c1c1c;left:16.23px;transform-origin:0 0;transform:scaleX(0.8850);">35</span>
<span class="t" style="top:1545.70px;font-size:30px;color:#000;left:72.00px;transform-origin:0 0;transform:scaleX(0.8850);">X211121102</span>
<span class="t" style="top:1545.70px;font-size:30px;color:#000;left:1281.00px;transform-origin:0 0;transform:scaleX(0.8850);">m2</span>
<span class="t" style="top:1545.70px;font-size:30px;color:#000;right:2558.00px;transform-origin:100% 0;transform:scaleX(0.8850);">26,25</span>
<span class="t" style="top:1545.70px;font-size:30px;color:#000;right:2352.50px;transform-origin:100% 0;transform:scaleX(0.8850);">0,05</span>
<span class="t" style="top:1545.70px;font-size:30px;color:#000;right:2053.50px;transform-origin:100% 0;transform:scaleX(0.8850);">38,50</span>
<span class="t" style="top:1545.70px;font-size:30px;color:#000;right:1268.00px;transform-origin:100% 0;transform:scaleX(0.8640);">25-5-2011</span>
<span class="t" style="top:1585.90px;font-size:30px;color:#1c1c1c;left:16.23px;transform-origin:0 0;transform:scaleX(0.8850);">36</span>
<span class="t" style="top:1583.20px;font-size:30px;color:#000;left:72.00px;transform-origin:0 0;transform:scaleX(0.8850);">X216211204</span>
<span class="t" style="top:1583.20px;font-size:30px;color:#000;left:1281.00px;transform-origin:0 0;transform:scaleX(0.8850);">m3</span>
<span class="t" style="top:1583.20px;font-size:30px;color:#000;right:2558.00px;transform-origin:100% 0;transform:scaleX(0.8850);">13,13</span>
<span class="t" style="top:1583.20px;font-size:30px;color:#000;right:2352.50px;transform-origin:100% 0;transform:scaleX(0.8850);">0,55</span>
<span class="t" style="top:1583.20px;font-size:30px;color:#000;right:2053.50px;transform-origin:100% 0;transform:scaleX(0.8850);">38,50</span>
<span class="t" style="top:1583.20px;font-size:30px;color:#000;right:1268.00px;transform-origin:100% 0;transform:scaleX(0.8640);">25-5-2011</span>
<span class="t" style="top:1623.40px;font-size:30px;color:#1c1c1c;left:16.23px;transform-origin:0 0;transform:scaleX(0.8850);">37</span>
<span class="t" style="top:1620.70px;font-size:30px;color:#000;left:72.00px;transform-origin:0 0;transform:scaleX(0.8850);">X216213001</span>
<span class="t" style="top:1620.70px;font-size:30px;color:#000;left:1281.00px;transform-origin:0 0;transform:scaleX(0.8850);">m1</span>
<span class="t" style="top:1620.70px;font-size:30px;color:#000;right:2558.00px;transform-origin:100% 0;transform:scaleX(0.8850);">75,00</span>
<span class="t" style="top:1620.70px;font-size:30px;color:#000;right:2352.50px;transform-origin:100% 0;transform:scaleX(0.8850);">0,20</span>
<span class="t" style="top:1620.70px;font-size:30px;color:#000;right:2053.50px;transform-origin:100% 0;transform:scaleX(0.8850);">38,50</span>
<span class="t" style="top:1620.70px;font-size:30px;color:#000;right:1268.00px;transform-origin:100% 0;transform:scaleX(0.8640);">25-5-2011</span>
<span class="t" style="top:1660.90px;font-size:30px;color:#1c1c1c;left:16.23px;transform-origin:0 0;transform:scaleX(0.8850);">38</span>
<span class="t" style="top:1658.20px;font-size:30px;color:#000;left:72.00px;transform-origin:0 0;transform:scaleX(0.8850);">X216213002</span>
<span class="t" style="top:1658.20px;font-size:30px;color:#000;left:1281.00px;transform-origin:0 0;transform:scaleX(0.8850);">m1</span>
<span class="t" style="top:1658.20px;font-size:30px;color:#000;right:2558.00px;transform-origin:100% 0;transform:scaleX(0.8850);">300,00</span>
<span class="t" style="top:1658.20px;font-size:30px;color:#000;right:2352.50px;transform-origin:100% 0;transform:scaleX(0.8850);">0,05</span>
<span class="t" style="top:1658.20px;font-size:30px;color:#000;right:2053.50px;transform-origin:100% 0;transform:scaleX(0.8850);">38,50</span>
<span class="t" style="top:1658.20px;font-size:30px;color:#000;right:1268.00px;transform-origin:100% 0;transform:scaleX(0.8640);">25-5-2011</span>
<span class="t" style="top:1698.40px;font-size:30px;color:#1c1c1c;left:16.23px;transform-origin:0 0;transform:scaleX(0.8850);">39</span>
<span class="t" style="top:1695.70px;font-size:30px;color:#000;left:72.00px;transform-origin:0 0;transform:scaleX(0.8850);">X221224004</span>
<span class="t" style="top:1695.70px;font-size:30px;color:#000;left:1281.00px;transform-origin:0 0;transform:scaleX(0.8850);">st</span>
<span class="t" style="top:1695.70px;font-size:30px;color:#000;right:2558.00px;transform-origin:100% 0;transform:scaleX(0.8850);">97,50</span>
<span class="t" style="top:1695.70px;font-size:30px;color:#000;right:2352.50px;transform-origin:100% 0;transform:scaleX(0.8850);">0,60</span>
<span class="t" style="top:1695.70px;font-size:30px;color:#000;right:2053.50px;transform-origin:100% 0;transform:scaleX(0.8850);">38,50</span>
<span class="t" style="top:1695.70px;font-size:30px;color:#000;right:1268.00px;transform-origin:100% 0;transform:scaleX(0.8640);">25-5-2011</span>
<span class="t" style="top:1735.90px;font-size:30px;color:#1c1c1c;left:16.23px;transform-origin:0 0;transform:scaleX(0.8850);">40</span>
<span class="t" style="top:1733.20px;font-size:30px;color:#000;left:72.00px;transform-origin:0 0;transform:scaleX(0.8850);">X223232006</span>
<span class="t" style="top:1733.20px;font-size:30px;color:#000;left:1281.00px;transform-origin:0 0;transform:scaleX(0.8850);">m1</span>
<span class="t" style="top:1733.20px;font-size:30px;color:#000;right:2558.00px;transform-origin:100% 0;transform:scaleX(0.8850);">249,16</span>
<span class="t" style="top:1733.20px;font-size:30px;color:#000;right:2352.50px;transform-origin:100% 0;transform:scaleX(0.8850);">0,04</span>
<span class="t" style="top:1733.20px;font-size:30px;color:#000;right:2053.50px;transform-origin:100% 0;transform:scaleX(0.8850);">38,50</span>
<span class="t" style="top:1733.20px;font-size:30px;color:#000;right:1268.00px;transform-origin:100% 0;transform:scaleX(0.8640);">25-5-2011</span>
<span class="t" style="top:1773.40px;font-size:30px;color:#1c1c1c;left:16.23px;transform-origin:0 0;transform:scaleX(0.8850);">41</span>
<span class="t" style="top:1770.70px;font-size:30px;color:#000;left:72.00px;transform-origin:0 0;transform:scaleX(0.8850);">X223232007</span>
<span class="t" style="top:1770.70px;font-size:30px;color:#000;left:1281.00px;transform-origin:0 0;transform:scaleX(0.8850);">st</span>
<span class="t" style="top:1770.70px;font-size:30px;color:#000;right:2558.00px;transform-origin:100% 0;transform:scaleX(0.8850);">331,89</span>
<span class="t" style="top:1770.70px;font-size:30px;color:#000;right:2352.50px;transform-origin:100% 0;transform:scaleX(0.8850);">0,01</span>
<span class="t" style="top:1770.70px;font-size:30px;color:#000;right:2053.50px;transform-origin:100% 0;transform:scaleX(0.8850);">38,50</span>
<span class="t" style="top:1770.70px;font-size:30px;color:#000;right:1268.00px;transform-origin:100% 0;transform:scaleX(0.8640);">25-5-2011</span>
<span class="t" style="top:1810.90px;font-size:30px;color:#1c1c1c;left:16.23px;transform-origin:0 0;transform:scaleX(0.8850);">42</span>
<span class="t" style="top:1808.20px;font-size:30px;color:#000;left:72.00px;transform-origin:0 0;transform:scaleX(0.8850);">X223233101</span>
<span class="t" style="top:1808.20px;font-size:30px;color:#000;left:1281.00px;transform-origin:0 0;transform:scaleX(0.8850);">m2</span>
<span class="t" style="top:1808.20px;font-size:30px;color:#000;right:2558.00px;transform-origin:100% 0;transform:scaleX(0.8850);">299,00</span>
<span class="t" style="top:1808.20px;font-size:30px;color:#000;right:2352.50px;transform-origin:100% 0;transform:scaleX(0.8850);">0,12</span>
<span class="t" style="top:1808.20px;font-size:30px;color:#000;right:2053.50px;transform-origin:100% 0;transform:scaleX(0.8850);">38,50</span>
<span class="t" style="top:1808.20px;font-size:30px;color:#000;right:1268.00px;transform-origin:100% 0;transform:scaleX(0.8640);">25-5-2011</span>
<span class="t" style="top:1855.61px;font-size:30px;color:#37957a;left:16.23px;transform-origin:0 0;transform:scaleX(0.8850);">43</span>
<span class="t" style="top:1845.11px;font-size:30px;color:#000;left:72.00px;transform-origin:0 0;transform:scaleX(0.8850);">X223233302</span>
<span class="t" style="top:1845.11px;font-size:30px;color:#4e4e4e;left:1281.00px;transform-origin:0 0;transform:scaleX(0.8850);">m1</span>
<span class="t" style="top:1845.11px;font-size:30px;color:#4e4e4e;right:2558.00px;transform-origin:100% 0;transform:scaleX(0.8850);">124,75</span>
<span class="t" style="top:1845.11px;font-size:30px;color:#4e4e4e;right:1856.00px;transform-origin:100% 0;transform:scaleX(0.8850);">10,00</span>
<span class="t" style="top:1845.11px;font-size:30px;color:#4e4e4e;right:1268.00px;transform-origin:100% 0;transform:scaleX(0.8640);">16-10-2025</span>
<span class="t" style="top:1902.40px;font-size:30px;color:#1c1c1c;left:16.23px;transform-origin:0 0;transform:scaleX(0.8850);">44</span>
<span class="t" style="top:1899.70px;font-size:30px;color:#000;left:72.00px;transform-origin:0 0;transform:scaleX(0.8850);">X223241001</span>
<span class="t" style="top:1899.70px;font-size:30px;color:#000;left:1281.00px;transform-origin:0 0;transform:scaleX(0.8850);">m1</span>
<span class="t" style="top:1899.70px;font-size:30px;color:#000;right:2558.00px;transform-origin:100% 0;transform:scaleX(0.8850);">75,00</span>
<span class="t" style="top:1899.70px;font-size:30px;color:#000;right:2352.50px;transform-origin:100% 0;transform:scaleX(0.8850);">0,15</span>
<span class="t" style="top:1899.70px;font-size:30px;color:#000;right:2053.50px;transform-origin:100% 0;transform:scaleX(0.8850);">38,50</span>
<span class="t" style="top:1899.70px;font-size:30px;color:#000;right:1268.00px;transform-origin:100% 0;transform:scaleX(0.8640);">25-5-2011</span>
<span class="t" style="top:1939.90px;font-size:30px;color:#1c1c1c;left:16.23px;transform-origin:0 0;transform:scaleX(0.8850);">45</span>
<span class="t" style="top:1937.20px;font-size:30px;color:#000;left:72.00px;transform-origin:0 0;transform:scaleX(0.8850);">X227244004</span>
<span class="t" style="top:1937.20px;font-size:30px;color:#000;left:1281.00px;transform-origin:0 0;transform:scaleX(0.8850);">st</span>
<span class="t" style="top:1937.20px;font-size:30px;color:#000;right:2558.00px;transform-origin:100% 0;transform:scaleX(0.8850);">75,00</span>
<span class="t" style="top:1937.20px;font-size:30px;color:#000;right:2352.50px;transform-origin:100% 0;transform:scaleX(0.8850);">0,05</span>
<span class="t" style="top:1937.20px;font-size:30px;color:#000;right:2053.50px;transform-origin:100% 0;transform:scaleX(0.8850);">38,50</span>
<span class="t" style="top:1937.20px;font-size:30px;color:#000;right:1268.00px;transform-origin:100% 0;transform:scaleX(0.8640);">25-5-2011</span>
<span class="t" style="top:1977.40px;font-size:30px;color:#1c1c1c;left:16.23px;transform-origin:0 0;transform:scaleX(0.8850);">46</span>
<span class="t" style="top:1974.70px;font-size:30px;color:#000;left:72.00px;transform-origin:0 0;transform:scaleX(0.8850);">X227244005</span>
<span class="t" style="top:1974.70px;font-size:30px;color:#000;left:1281.00px;transform-origin:0 0;transform:scaleX(0.8850);">st</span>
<span class="t" style="top:1974.70px;font-size:30px;color:#000;right:2558.00px;transform-origin:100% 0;transform:scaleX(0.8850);">150,00</span>
<span class="t" style="top:1974.70px;font-size:30px;color:#000;right:2352.50px;transform-origin:100% 0;transform:scaleX(0.8850);">0,08</span>
<span class="t" style="top:1974.70px;font-size:30px;color:#000;right:2053.50px;transform-origin:100% 0;transform:scaleX(0.8850);">38,50</span>
<span class="t" style="top:1974.70px;font-size:30px;color:#000;right:1268.00px;transform-origin:100% 0;transform:scaleX(0.8640);">25-5-2011</span>
<span class="t" style="top:2014.90px;font-size:30px;color:#1c1c1c;left:16.23px;transform-origin:0 0;transform:scaleX(0.8850);">47</span>
<span class="t" style="top:2012.20px;font-size:30px;color:#000;left:72.00px;transform-origin:0 0;transform:scaleX(0.8850);">X227244007</span>
<span class="t" style="top:2012.20px;font-size:30px;color:#000;left:1281.00px;transform-origin:0 0;transform:scaleX(0.8850);">st</span>
<span class="t" style="top:2012.20px;font-size:30px;color:#000;right:2558.00px;transform-origin:100% 0;transform:scaleX(0.8850);">15,00</span>
<span class="t" style="top:2012.20px;font-size:30px;color:#000;right:2352.50px;transform-origin:100% 0;transform:scaleX(0.8850);">0,05</span>
<span class="t" style="top:2012.20px;font-size:30px;color:#000;right:2053.50px;transform-origin:100% 0;transform:scaleX(0.8850);">38,50</span>
<span class="t" style="top:2012.20px;font-size:30px;color:#000;right:1268.00px;transform-origin:100% 0;transform:scaleX(0.8640);">25-5-2011</span>
<span class="t" style="top:2052.41px;font-size:30px;color:#1c1c1c;left:16.23px;transform-origin:0 0;transform:scaleX(0.8850);">48</span>
<span class="t" style="top:2049.70px;font-size:30px;color:#000;left:72.00px;transform-origin:0 0;transform:scaleX(0.8850);">X247241203</span>
<span class="t" style="top:2049.70px;font-size:30px;color:#000;left:1281.00px;transform-origin:0 0;transform:scaleX(0.8850);">m1</span>
<span class="t" style="top:2049.70px;font-size:30px;color:#000;right:2558.00px;transform-origin:100% 0;transform:scaleX(0.8850);">70,00</span>
<span class="t" style="top:2049.70px;font-size:30px;color:#000;right:2352.50px;transform-origin:100% 0;transform:scaleX(0.8850);">0,15</span>
<span class="t" style="top:2049.70px;font-size:30px;color:#000;right:2053.50px;transform-origin:100% 0;transform:scaleX(0.8850);">38,50</span>
<span class="t" style="top:2049.70px;font-size:30px;color:#000;right:1268.00px;transform-origin:100% 0;transform:scaleX(0.8640);">25-5-2011</span>
<span class="t" style="top:2089.91px;font-size:30px;color:#1c1c1c;left:16.23px;transform-origin:0 0;transform:scaleX(0.8850);">49</span>
<span class="t" style="top:2087.20px;font-size:30px;color:#000;left:72.00px;transform-origin:0 0;transform:scaleX(0.8850);">X247241402</span>
<span class="t" style="top:2087.20px;font-size:30px;color:#000;left:1281.00px;transform-origin:0 0;transform:scaleX(0.8850);">m1</span>
<span class="t" style="top:2087.20px;font-size:30px;color:#000;right:2558.00px;transform-origin:100% 0;transform:scaleX(0.8850);">35,00</span>
<span class="t" style="top:2087.20px;font-size:30px;color:#000;right:2352.50px;transform-origin:100% 0;transform:scaleX(0.8850);">0,20</span>
<span class="t" style="top:2087.20px;font-size:30px;color:#000;right:2053.50px;transform-origin:100% 0;transform:scaleX(0.8850);">38,50</span>
<span class="t" style="top:2087.20px;font-size:30px;color:#000;right:1268.00px;transform-origin:100% 0;transform:scaleX(0.8640);">25-5-2011</span>
<span class="t" style="top:2127.41px;font-size:30px;color:#1c1c1c;left:16.23px;transform-origin:0 0;transform:scaleX(0.8850);">50</span>
<span class="t" style="top:2124.70px;font-size:30px;color:#000;left:72.00px;transform-origin:0 0;transform:scaleX(0.8850);">X316213001</span>
<span class="t" style="top:2124.70px;font-size:30px;color:#000;left:1281.00px;transform-origin:0 0;transform:scaleX(0.8850);">uur</span>
<span class="t" style="top:2124.70px;font-size:30px;color:#000;right:2558.00px;transform-origin:100% 0;transform:scaleX(0.8850);">2,48</span>
<span class="t" style="top:2124.70px;font-size:30px;color:#000;right:1683.50px;transform-origin:100% 0;transform:scaleX(0.8850);">88,00</span>
<span class="t" style="top:2124.70px;font-size:30px;color:#000;right:1268.00px;transform-origin:100% 0;transform:scaleX(0.8640);">3-7-2013</span>
<span class="t" style="top:2164.91px;font-size:30px;color:#1c1c1c;left:16.23px;transform-origin:0 0;transform:scaleX(0.8850);">51</span>
<span class="t" style="top:2162.20px;font-size:30px;color:#000;left:72.00px;transform-origin:0 0;transform:scaleX(0.8850);">X316214001</span>
<span class="t" style="top:2162.20px;font-size:30px;color:#000;left:1281.00px;transform-origin:0 0;transform:scaleX(0.8850);">m1</span>
<span class="t" style="top:2162.20px;font-size:30px;color:#000;right:2558.00px;transform-origin:100% 0;transform:scaleX(0.8850);">1.050,00</span>
<span class="t" style="top:2162.20px;font-size:30px;color:#000;right:1683.50px;transform-origin:100% 0;transform:scaleX(0.8850);">0,86</span>
<span class="t" style="top:2162.20px;font-size:30px;color:#000;right:1268.00px;transform-origin:100% 0;transform:scaleX(0.8640);">3-7-2013</span>
<span class="t" style="top:1845.11px;font-size:30px;color:#4e4e4e;right:869.50px;transform-origin:100% 0;transform:scaleX(0.8850);">113,45</span>
<span class="t" style="top:1845.11px;font-size:30px;color:#4e4e4e;right:668.50px;transform-origin:100% 0;transform:scaleX(0.8850);">20,29</span>
<div class="r" style="left:3770.3px;top:894px;width:41px;height:1304px;background:#dcdcdc;"></div>
<div class="r" style="left:3770.3px;top:894px;width:8px;height:1304px;background:#e8e8e8;"></div>
<div class="r" style="left:3770.3px;top:941px;width:2.8px;height:1257px;background:#929292;"></div>
<div class="r" style="left:3771px;top:894px;width:41px;height:9px;background:#dddddd;border:2.5px solid #9a9a9a;"></div>
<div class="r" style="left:3778.5px;top:904px;width:35px;height:36px;background:#fff;border:2.5px solid #ababab;"></div>
<svg class="i" style="left:3785px;top:918px" width="22.5" height="12.5" viewBox="0 0 22.5 12.5"><polygon points="11.25,0 22.5,12.5 0,12.5" fill="#7a7a7a"/></svg>
<div class="r" style="left:3778.5px;top:1298px;width:35px;height:670px;background:#fff;border:2.5px solid #ababab;"></div>
<div class="r" style="left:3778.5px;top:2166px;width:35px;height:36px;background:#fff;border:2.5px solid #ababab;"></div>
<svg class="i" style="left:3785px;top:2178px" width="22.5" height="12.5" viewBox="0 0 22.5 12.5"><polygon points="0,0 22.5,0 11.25,12.5" fill="#7a7a7a"/></svg>
</div>
</body></html>
